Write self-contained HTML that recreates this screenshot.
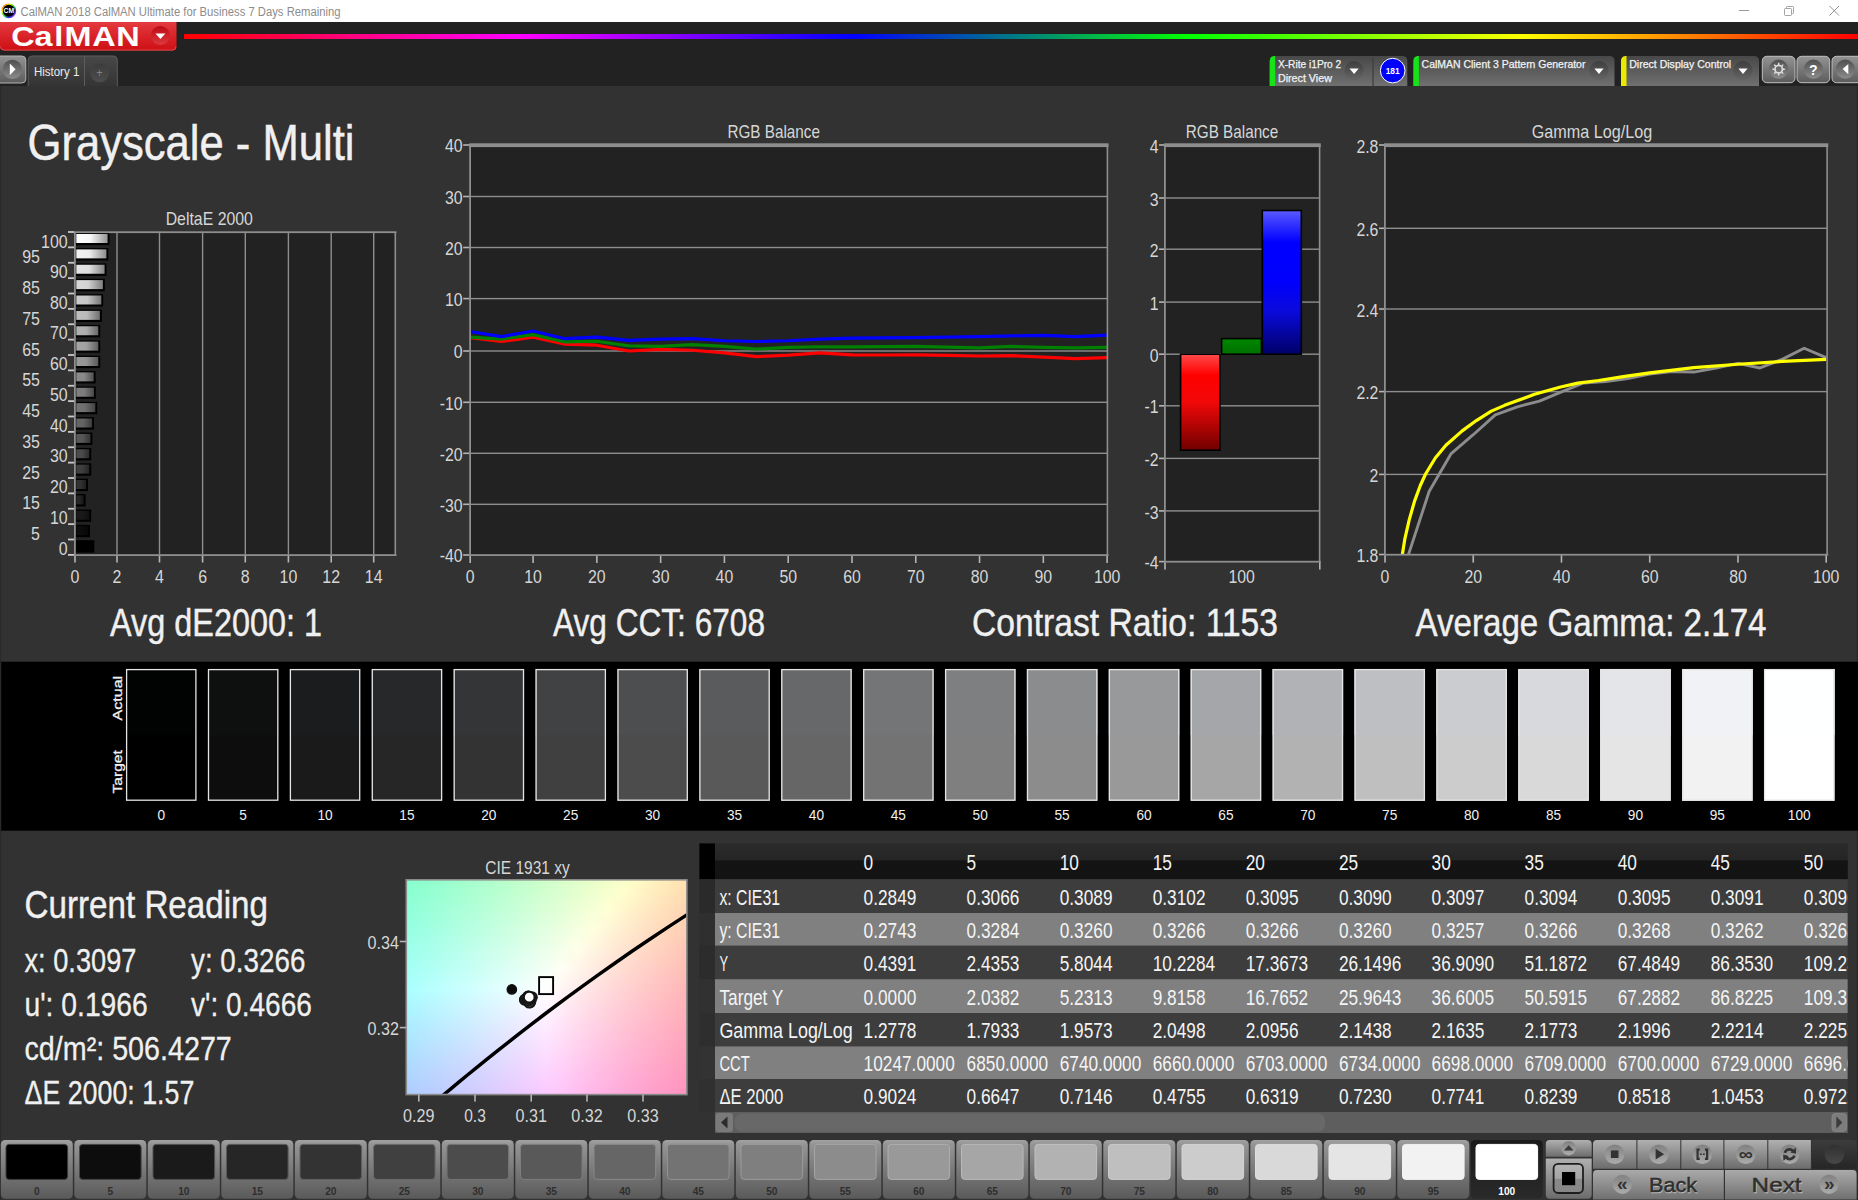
<!DOCTYPE html>
<html lang="en"><head><meta charset="utf-8"><title>CalMAN 2018</title>
<style>
#cie{position:absolute;left:406px;top:880px;width:281px;height:215px;background:linear-gradient(90deg,#86ffce,#8dffce,#95ffcd,#9dffcd,#a5ffcd,#adffcc,#b5ffcc,#beffcb,#c6ffcb,#cfffcb,#d7ffca,#e0ffca,#e9ffca,#f2ffc9,#fcffc9,#fff9c4,#fff0bc,#ffe8b6,#ffe0af) 0 0px/100% 4px no-repeat,
linear-gradient(90deg,#87ffd0,#8fffcf,#96ffcf,#9effcf,#a6ffce,#afffce,#b7ffce,#bfffcd,#c8ffcd,#d0ffcc,#d9ffcc,#e2ffcc,#ebffcb,#f4ffcb,#fdffcb,#fff7c4,#ffefbd,#ffe6b6,#ffdeaf) 0 4px/100% 4px no-repeat,
linear-gradient(90deg,#88ffd1,#90ffd1,#98ffd1,#a0ffd0,#a8ffd0,#b0ffd0,#b8ffcf,#c1ffcf,#c9ffcf,#d2ffce,#dbffce,#e4ffcd,#edffcd,#f6ffcd,#ffffcc,#fff5c4,#ffedbd,#ffe5b6,#ffddb0) 0 8px/100% 4px no-repeat,
linear-gradient(90deg,#89ffd3,#91ffd3,#99ffd2,#a1ffd2,#a9ffd2,#b1ffd1,#baffd1,#c2ffd1,#cbffd0,#d4ffd0,#dcffd0,#e5ffcf,#efffcf,#f8ffcf,#fffdcc,#fff4c5,#ffebbd,#ffe3b6,#ffdbb0) 0 12px/100% 4px no-repeat,
linear-gradient(90deg,#8bffd4,#92ffd4,#9affd4,#a2ffd4,#abffd3,#b3ffd3,#bbffd3,#c4ffd2,#ccffd2,#d5ffd2,#deffd1,#e7ffd1,#f0ffd1,#faffd0,#fffbcd,#fff2c5,#ffe9be,#ffe1b7,#ffdab0) 0 16px/100% 4px no-repeat,
linear-gradient(90deg,#8cffd6,#94ffd6,#9cffd6,#a4ffd5,#acffd5,#b4ffd5,#bdffd4,#c5ffd4,#ceffd4,#d7ffd4,#e0ffd3,#e9ffd3,#f2ffd3,#fcffd2,#fff9cd,#fff0c5,#ffe8be,#ffe0b7,#ffd8b1) 0 20px/100% 4px no-repeat,
linear-gradient(90deg,#8dffd8,#95ffd8,#9dffd7,#a5ffd7,#adffd7,#b6ffd7,#beffd6,#c7ffd6,#d0ffd6,#d9ffd5,#e2ffd5,#ebffd5,#f4ffd4,#feffd4,#fff7cd,#ffeec6,#ffe6be,#ffdeb7,#ffd6b1) 0 24px/100% 4px no-repeat,
linear-gradient(90deg,#8effda,#96ffd9,#9effd9,#a7ffd9,#afffd9,#b7ffd8,#c0ffd8,#c8ffd8,#d1ffd7,#daffd7,#e3ffd7,#edffd7,#f6ffd6,#ffffd6,#fff5cd,#ffecc6,#ffe4bf,#ffdcb8,#ffd5b1) 0 28px/100% 4px no-repeat,
linear-gradient(90deg,#90ffdb,#98ffdb,#a0ffdb,#a8ffdb,#b0ffda,#b9ffda,#c1ffda,#caffda,#d3ffd9,#dcffd9,#e5ffd9,#eeffd8,#f8ffd8,#fffdd6,#fff3ce,#ffebc6,#ffe2bf,#ffdbb8,#ffd3b2) 0 32px/100% 4px no-repeat,
linear-gradient(90deg,#91ffdd,#99ffdd,#a1ffdd,#a9ffdc,#b2ffdc,#baffdc,#c3ffdc,#ccffdb,#d5ffdb,#deffdb,#e7ffdb,#f0ffda,#faffda,#fffbd6,#fff2ce,#ffe9c6,#ffe1bf,#ffd9b8,#ffd2b2) 0 36px/100% 4px no-repeat,
linear-gradient(90deg,#92ffdf,#9affdf,#a2ffde,#abffde,#b3ffde,#bcffde,#c4ffdd,#cdffdd,#d6ffdd,#dfffdd,#e9ffdc,#f2ffdc,#fcffdc,#fff9d6,#fff0ce,#ffe7c7,#ffdfbf,#ffd7b9,#ffd0b2) 0 40px/100% 4px no-repeat,
linear-gradient(90deg,#93ffe1,#9cffe0,#a4ffe0,#acffe0,#b5ffe0,#bdffe0,#c6ffdf,#cfffdf,#d8ffdf,#e1ffdf,#ebffde,#f4ffde,#feffde,#fff7d7,#ffeecf,#ffe5c7,#ffddc0,#ffd6b9,#ffcfb2) 0 44px/100% 4px no-repeat,
linear-gradient(90deg,#95ffe2,#9dffe2,#a5ffe2,#aeffe2,#b6ffe2,#bfffe1,#c8ffe1,#d1ffe1,#daffe1,#e3ffe1,#ecffe0,#f6ffe0,#fffedf,#fff5d7,#ffeccf,#ffe4c7,#ffdcc0,#ffd4b9,#ffcdb3) 0 48px/100% 4px no-repeat,
linear-gradient(90deg,#96ffe4,#9effe4,#a7ffe4,#afffe4,#b8ffe3,#c0ffe3,#c9ffe3,#d2ffe3,#dbffe3,#e5ffe2,#eeffe2,#f8ffe2,#fffce0,#fff3d7,#ffeacf,#ffe2c8,#ffdac0,#ffd3ba,#ffcbb3) 0 52px/100% 4px no-repeat,
linear-gradient(90deg,#97ffe6,#a0ffe6,#a8ffe6,#b1ffe6,#b9ffe5,#c2ffe5,#cbffe5,#d4ffe5,#ddffe5,#e7ffe4,#f0ffe4,#faffe4,#fffbe0,#fff1d7,#ffe9cf,#ffe0c8,#ffd8c1,#ffd1ba,#ffcab3) 0 56px/100% 4px no-repeat,
linear-gradient(90deg,#99ffe8,#a1ffe8,#aaffe8,#b2ffe7,#bbffe7,#c4ffe7,#cdffe7,#d6ffe7,#dfffe7,#e8ffe6,#f2ffe6,#fcffe6,#fff9e0,#ffefd8,#ffe7d0,#ffdfc8,#ffd7c1,#ffcfba,#ffc8b4) 0 60px/100% 4px no-repeat,
linear-gradient(90deg,#9affea,#a3ffea,#abffe9,#b4ffe9,#bcffe9,#c5ffe9,#ceffe9,#d7ffe9,#e1ffe9,#eaffe8,#f4ffe8,#feffe8,#fff7e0,#ffeed8,#ffe5d0,#ffddc8,#ffd5c1,#ffceba,#ffc7b4) 0 64px/100% 4px no-repeat,
linear-gradient(90deg,#9cffec,#a4ffec,#acffeb,#b5ffeb,#beffeb,#c7ffeb,#d0ffeb,#d9ffeb,#e3ffeb,#ecffea,#f6ffea,#fffee9,#fff5e1,#ffecd8,#ffe3d0,#ffdbc9,#ffd3c1,#ffccbb,#ffc5b4) 0 68px/100% 4px no-repeat,
linear-gradient(90deg,#9dffee,#a5ffed,#aeffed,#b7ffed,#c0ffed,#c9ffed,#d2ffed,#dbffed,#e4ffed,#eeffec,#f8ffec,#fffcea,#fff3e1,#ffead8,#ffe1d0,#ffd9c9,#ffd2c2,#ffcbbb,#ffc4b5) 0 72px/100% 4px no-repeat,
linear-gradient(90deg,#9effef,#a7ffef,#afffef,#b8ffef,#c1ffef,#caffef,#d3ffef,#ddffef,#e6ffef,#f0ffee,#faffee,#fffaea,#fff1e1,#ffe8d9,#ffe0d1,#ffd8c9,#ffd0c2,#ffc9bb,#ffc2b5) 0 76px/100% 4px no-repeat,
linear-gradient(90deg,#a0fff1,#a8fff1,#b1fff1,#bafff1,#c3fff1,#ccfff1,#d5fff1,#dffff1,#e8fff1,#f2fff1,#fcfff0,#fff8ea,#ffefe1,#ffe6d9,#ffded1,#ffd6c9,#ffcfc2,#ffc8bc,#ffc1b5) 0 80px/100% 4px no-repeat,
linear-gradient(90deg,#a1fff3,#aafff3,#b2fff3,#bbfff3,#c4fff3,#cefff3,#d7fff3,#e0fff3,#eafff3,#f4fff3,#fefff3,#fff6ea,#ffede1,#ffe4d9,#ffdcd1,#ffd4ca,#ffcdc3,#ffc6bc,#ffbfb6) 0 84px/100% 4px no-repeat,
linear-gradient(90deg,#a3fff5,#abfff5,#b4fff5,#bdfff5,#c6fff5,#cffff5,#d9fff5,#e2fff5,#ecfff5,#f6fff5,#fffef4,#fff5eb,#ffebe2,#ffe3d9,#ffdbd1,#ffd3ca,#ffcbc3,#ffc5bc,#ffbeb6) 0 88px/100% 4px no-repeat,
linear-gradient(90deg,#a4fff7,#adfff7,#b6fff7,#bffff7,#c8fff7,#d1fff7,#dafff7,#e4fff7,#eefff7,#f8fff7,#fffcf4,#fff3eb,#ffe9e2,#ffe1da,#ffd9d2,#ffd1ca,#ffcac3,#ffc3bc,#ffbcb6) 0 92px/100% 4px no-repeat,
linear-gradient(90deg,#a5fff9,#aefff9,#b7fff9,#c0fff9,#c9fff9,#d3fff9,#dcfff9,#e6fff9,#f0fff9,#fafff9,#fffaf4,#fff1eb,#ffe8e2,#ffdfda,#ffd7d2,#ffd0cb,#ffc8c3,#ffc1bd,#ffbbb6) 0 96px/100% 4px no-repeat,
linear-gradient(90deg,#a7fffb,#b0fffb,#b9fffb,#c2fffb,#cbfffb,#d5fffb,#defffb,#e8fffb,#f2fffb,#fcfffb,#fff8f5,#ffefeb,#ffe6e2,#ffddda,#ffd5d2,#ffcecb,#ffc7c4,#ffc0bd,#ffbab7) 0 100px/100% 4px no-repeat,
linear-gradient(90deg,#a8fffd,#b1fffd,#bafffd,#c4fffd,#cdfffd,#d6fffd,#e0fffd,#eafffd,#f4fffd,#fefffd,#fff6f5,#ffedeb,#ffe4e3,#ffdcda,#ffd4d2,#ffcccb,#ffc5c4,#ffbebd,#ffb8b7) 0 104px/100% 4px no-repeat,
linear-gradient(90deg,#aaffff,#b3ffff,#bcffff,#c5feff,#cefeff,#d8feff,#e1feff,#ebfeff,#f5feff,#fffeff,#fff4f5,#ffebec,#ffe2e3,#ffdadb,#ffd2d3,#ffcbcb,#ffc4c4,#ffbdbe,#ffb7b7) 0 108px/100% 4px no-repeat,
linear-gradient(90deg,#aafdff,#b3fcff,#bcfcff,#c5fcff,#cefcff,#d8fcff,#e1fcff,#ebfcff,#f5fcff,#fffcff,#fff2f5,#ffe9ec,#ffe0e3,#ffd8db,#ffd0d3,#ffc9cc,#ffc2c5,#ffbbbe,#ffb5b8) 0 112px/100% 4px no-repeat,
linear-gradient(90deg,#aafaff,#b3faff,#bcfaff,#c5faff,#cefaff,#d8faff,#e1faff,#ebfaff,#f5faff,#fffaff,#fff0f5,#ffe7ec,#ffdfe3,#ffd6db,#ffcfd3,#ffc7cc,#ffc1c5,#ffbabe,#ffb4b8) 0 116px/100% 4px no-repeat,
linear-gradient(90deg,#aaf8ff,#b3f8ff,#bcf8ff,#c5f8ff,#cef8ff,#d8f8ff,#e1f8ff,#ebf8ff,#f5f8ff,#fff8ff,#ffeef5,#ffe5ec,#ffdde3,#ffd5db,#ffcdd3,#ffc6cc,#ffbfc5,#ffb9be,#ffb2b8) 0 120px/100% 4px no-repeat,
linear-gradient(90deg,#aaf6ff,#b3f6ff,#bcf6ff,#c5f6ff,#cef6ff,#d8f6ff,#e1f6ff,#ebf6ff,#f5f6ff,#fff6ff,#ffecf6,#ffe3ec,#ffdbe4,#ffd3db,#ffcbd4,#ffc4cc,#ffbdc5,#ffb7bf,#ffb1b8) 0 124px/100% 4px no-repeat,
linear-gradient(90deg,#aaf4ff,#b3f4ff,#bcf4ff,#c5f4ff,#cef4ff,#d8f4ff,#e1f4ff,#ebf4ff,#f4f4ff,#fef3ff,#ffebf6,#ffe2ed,#ffd9e4,#ffd1dc,#ffcad4,#ffc3cd,#ffbcc6,#ffb6bf,#ffafb9) 0 128px/100% 4px no-repeat,
linear-gradient(90deg,#aaf2ff,#b3f2ff,#bcf2ff,#c5f2ff,#cef2ff,#d8f2ff,#e1f2ff,#ebf2ff,#f4f1ff,#fef1ff,#ffe9f6,#ffe0ed,#ffd7e4,#ffd0dc,#ffc8d4,#ffc1cd,#ffbac6,#ffb4bf,#ffaeb9) 0 132px/100% 4px no-repeat,
linear-gradient(90deg,#abf0ff,#b3f0ff,#bcf0ff,#c5f0ff,#cef0ff,#d8f0ff,#e1f0ff,#eaefff,#f4efff,#feefff,#ffe7f6,#ffdeed,#ffd6e4,#ffcedc,#ffc7d4,#ffc0cd,#ffb9c6,#ffb3c0,#ffadb9) 0 136px/100% 4px no-repeat,
linear-gradient(90deg,#abeeff,#b3eeff,#bceeff,#c5eeff,#ceeeff,#d7eeff,#e1eeff,#eaedff,#f4edff,#feedff,#ffe5f6,#ffdced,#ffd4e5,#ffccdc,#ffc5d5,#ffbecd,#ffb7c6,#ffb1c0,#ffabba) 0 140px/100% 4px no-repeat,
linear-gradient(90deg,#abecff,#b3ecff,#bcecff,#c5ecff,#ceecff,#d7ecff,#e1ebff,#eaebff,#f4ebff,#feebff,#ffe3f7,#ffdaed,#ffd2e5,#ffcbdd,#ffc3d5,#ffbdce,#ffb6c7,#ffb0c0,#ffaaba) 0 144px/100% 4px no-repeat,
linear-gradient(90deg,#abebff,#b4eaff,#bceaff,#c5eaff,#ceeaff,#d7eaff,#e1e9ff,#eae9ff,#f4e9ff,#fee9ff,#ffe1f7,#ffd9ee,#ffd1e5,#ffc9dd,#ffc2d5,#ffbbce,#ffb5c7,#ffaec0,#ffa9ba) 0 148px/100% 4px no-repeat,
linear-gradient(90deg,#abe9ff,#b4e8ff,#bce8ff,#c5e8ff,#cee8ff,#d7e8ff,#e1e7ff,#eae7ff,#f4e7ff,#fde7ff,#ffdff7,#ffd7ee,#ffcfe5,#ffc7dd,#ffc0d5,#ffb9ce,#ffb3c7,#ffadc1,#ffa7ba) 0 152px/100% 4px no-repeat,
linear-gradient(90deg,#abe7ff,#b4e7ff,#bce6ff,#c5e6ff,#cee6ff,#d7e6ff,#e1e5ff,#eae5ff,#f4e5ff,#fde5ff,#ffddf7,#ffd5ee,#ffcde5,#ffc6dd,#ffbfd6,#ffb8ce,#ffb2c7,#ffacc1,#ffa6bb) 0 156px/100% 4px no-repeat,
linear-gradient(90deg,#abe5ff,#b4e5ff,#bde4ff,#c5e4ff,#cee4ff,#d7e4ff,#e1e3ff,#eae3ff,#f4e3ff,#fde3ff,#ffdcf7,#ffd3ee,#ffcbe6,#ffc4de,#ffbdd6,#ffb6cf,#ffb0c8,#ffaac1,#ffa4bb) 0 160px/100% 4px no-repeat,
linear-gradient(90deg,#abe3ff,#b4e3ff,#bde2ff,#c5e2ff,#cee2ff,#d7e2ff,#e1e1ff,#eae1ff,#f3e1ff,#fde1ff,#ffdaf7,#ffd2ee,#ffcae6,#ffc2de,#ffbbd6,#ffb5cf,#ffafc8,#ffa9c1,#ffa3bb) 0 164px/100% 4px no-repeat,
linear-gradient(90deg,#ace1ff,#b4e1ff,#bde1ff,#c5e0ff,#cee0ff,#d7e0ff,#e1e0ff,#eadfff,#f3dfff,#fddfff,#ffd8f8,#ffd0ef,#ffc8e6,#ffc1de,#ffbad6,#ffb3cf,#ffadc8,#ffa7c2,#ffa2bb) 0 168px/100% 4px no-repeat,
linear-gradient(90deg,#acdfff,#b4dfff,#bddfff,#c5deff,#cedeff,#d7deff,#e0deff,#eaddff,#f3ddff,#fdddff,#ffd6f8,#ffceef,#ffc6e6,#ffbfde,#ffb8d7,#ffb2cf,#ffacc8,#ffa6c2,#ffa0bc) 0 172px/100% 4px no-repeat,
linear-gradient(90deg,#acddff,#b4ddff,#bdddff,#c6dcff,#cedcff,#d7dcff,#e0dcff,#eadbff,#f3dbff,#fddbff,#ffd4f8,#ffccef,#ffc5e6,#ffbede,#ffb7d7,#ffb0d0,#ffaac9,#ffa5c2,#ff9fbc) 0 176px/100% 4px no-repeat,
linear-gradient(90deg,#acdbff,#b4dbff,#bddbff,#c6dbff,#cedaff,#d7daff,#e0daff,#ead9ff,#f3d9ff,#fcd9ff,#ffd3f8,#ffcbef,#ffc3e7,#ffbcdf,#ffb5d7,#ffafd0,#ffa9c9,#ffa3c2,#ff9ebc) 0 180px/100% 4px no-repeat,
linear-gradient(90deg,#acdaff,#b4d9ff,#bdd9ff,#c6d9ff,#ced8ff,#d7d8ff,#e0d8ff,#ead7ff,#f3d7ff,#fcd7ff,#ffd1f8,#ffc9ef,#ffc1e7,#ffbadf,#ffb4d7,#ffadd0,#ffa7c9,#ffa2c3,#ff9cbc) 0 184px/100% 4px no-repeat,
linear-gradient(90deg,#acd8ff,#b5d7ff,#bdd7ff,#c6d7ff,#ced7ff,#d7d6ff,#e0d6ff,#e9d6ff,#f3d5ff,#fcd5ff,#ffcff8,#ffc7ef,#ffc0e7,#ffb9df,#ffb2d7,#ffacd0,#ffa6c9,#ffa0c3,#ff9bbd) 0 188px/100% 4px no-repeat,
linear-gradient(90deg,#acd6ff,#b5d6ff,#bdd5ff,#c6d5ff,#ced5ff,#d7d4ff,#e0d4ff,#e9d4ff,#f3d3ff,#fcd3ff,#ffcdf9,#ffc5f0,#ffbee7,#ffb7df,#ffb1d8,#ffabd1,#ffa5ca,#ff9fc3,#ff9abd) 0 192px/100% 4px no-repeat,
linear-gradient(90deg,#acd4ff,#b5d4ff,#bdd3ff,#c6d3ff,#ced3ff,#d7d2ff,#e0d2ff,#e9d2ff,#f3d1ff,#fcd1ff,#ffcbf9,#ffc4f0,#ffbde7,#ffb6df,#ffafd8,#ffa9d1,#ffa3ca,#ff9ec3,#ff98bd) 0 196px/100% 4px no-repeat,
linear-gradient(90deg,#add2ff,#b5d2ff,#bdd2ff,#c6d1ff,#ced1ff,#d7d1ff,#e0d0ff,#e9d0ff,#f2cfff,#fccfff,#ffcaf9,#ffc2f0,#ffbbe8,#ffb4e0,#ffaed8,#ffa8d1,#ffa2ca,#ff9cc4,#ff97be) 0 200px/100% 4px no-repeat,
linear-gradient(90deg,#add1ff,#b5d0ff,#bdd0ff,#c6d0ff,#cecfff,#d7cfff,#e0ceff,#e9ceff,#f2ceff,#fccdff,#ffc8f9,#ffc0f0,#ffb9e8,#ffb3e0,#ffacd8,#ffa6d1,#ffa0ca,#ff9bc4,#ff96be) 0 204px/100% 4px no-repeat,
linear-gradient(90deg,#adcfff,#b5ceff,#bdceff,#c6ceff,#cecdff,#d7cdff,#e0cdff,#e9ccff,#f2ccff,#fccbff,#ffc6f9,#ffbff0,#ffb8e8,#ffb1e0,#ffabd9,#ffa5d1,#ff9fcb,#ff9ac4,#ff94be) 0 208px/100% 4px no-repeat,
linear-gradient(90deg,#adcdff,#b5cdff,#bdccff,#c6ccff,#ceccff,#d7cbff,#e0cbff,#e9caff,#f2caff,#fbc9ff,#ffc5f9,#ffbdf1,#ffb6e8,#ffb0e0,#ffa9d9,#ffa3d2,#ff9ecb,#ff98c4,#ff93be) 0 212px/100% 4px no-repeat}
html,body{margin:0;padding:0;background:#323232;width:1858px;height:1200px;overflow:hidden}
svg{position:absolute;left:0;top:0}
text{font-family:"Liberation Sans",sans-serif;white-space:pre}
</style></head>
<body>
<div id="cie"></div>
<svg width="1858" height="1200" viewBox="0 0 1858 1200">
<defs>
<linearGradient id="rb" x1="0" y1="0" x2="1" y2="0"><stop offset="0" stop-color="#ff0000"/><stop offset="0.2" stop-color="#ff00ff"/><stop offset="0.4" stop-color="#0000ff"/><stop offset="0.6" stop-color="#00ff00"/><stop offset="0.8" stop-color="#ffff00"/><stop offset="1" stop-color="#ff0000"/></linearGradient>
<linearGradient id="redbtn" x1="0" y1="0" x2="0" y2="1"><stop offset="0" stop-color="#e33b40"/><stop offset="0.5" stop-color="#d92328"/><stop offset="1" stop-color="#cd1015"/></linearGradient>
<linearGradient id="redc" x1="0" y1="0" x2="0" y2="1"><stop offset="0" stop-color="#bd0a14"/><stop offset="1" stop-color="#dc3a40"/></linearGradient>
<linearGradient id="gbtn" x1="0" y1="0" x2="0" y2="1"><stop offset="0" stop-color="#939393"/><stop offset="1" stop-color="#5c5c5c"/></linearGradient>
<linearGradient id="gcirc" x1="0" y1="0" x2="0" y2="1"><stop offset="0" stop-color="#505050"/><stop offset="1" stop-color="#8c8c8c"/></linearGradient>
<linearGradient id="tab" x1="0" y1="0" x2="0" y2="1"><stop offset="0" stop-color="#484848"/><stop offset="1" stop-color="#343434"/></linearGradient>
<linearGradient id="pcirc" x1="0" y1="0" x2="0" y2="1"><stop offset="0" stop-color="#3c3c3c"/><stop offset="1" stop-color="#4c4c4c"/></linearGradient>
<linearGradient id="panel" x1="0" y1="0" x2="0" y2="1"><stop offset="0" stop-color="#484848"/><stop offset="1" stop-color="#707070"/></linearGradient>
<linearGradient id="dcirc" x1="0" y1="0" x2="0" y2="1"><stop offset="0" stop-color="#3e3e3e"/><stop offset="1" stop-color="#666666"/></linearGradient>
<linearGradient id="icorim" x1="0" y1="0" x2="1" y2="1"><stop offset="0" stop-color="#ff2020"/><stop offset="0.25" stop-color="#ffe000"/><stop offset="0.5" stop-color="#20e020"/><stop offset="0.75" stop-color="#2040ff"/><stop offset="1" stop-color="#e020e0"/></linearGradient>
</defs>
<rect x="0" y="0" width="1858" height="22" fill="#ffffff"/>
<circle cx="8.8" cy="10.8" r="6.7" fill="#000000" stroke="url(#icorim)" stroke-width="1.4"/>
<text x="8.8" y="13.4" font-size="7" fill="#ffffff" text-anchor="middle" font-weight="bold" textLength="10.5" lengthAdjust="spacingAndGlyphs">CM</text>
<text x="20.5" y="15.5" font-size="12" fill="#8c8c8c" textLength="320" lengthAdjust="spacingAndGlyphs">CalMAN 2018 CalMAN Ultimate for Business 7 Days Remaining</text>
<line x1="1739" y1="10.5" x2="1749" y2="10.5" stroke="#9a9a9a" stroke-width="1"/>
<rect x="1784.5" y="8.5" width="7" height="7" fill="none" rx="0.8" stroke="#9a9a9a" stroke-width="0.9"/>
<path d="M1786.5 8.5V7.3Q1786.5 6.5 1787.3 6.5H1792.7Q1793.5 6.5 1793.5 7.3V12.7Q1793.5 13.5 1792.7 13.5H1791.5" fill="none" stroke="#9a9a9a" stroke-width="0.9"/>
<path d="M1829.5 6L1839 15.5M1839 6L1829.5 15.5" fill="none" stroke="#8c8c8c" stroke-width="0.95"/>
<rect x="0" y="22" width="1858" height="64" fill="#222222"/>
<rect x="184" y="34" width="1674" height="5" fill="url(#rb)"/>
<path d="M0 22H176.5V46.5Q176.5 50.6 172.5 50.6H4Q0 50.6 0 46.5Z" fill="url(#redbtn)"/>
<path d="M0.5 46.5Q0.5 50.1 4 50.1H172.5Q176 50.1 176 46.5" fill="none" stroke="#e8585c" stroke-width="0.8"/>
<text transform="translate(0,45.7) scale(1.15,1)" x="9.89 30.05 47.16 56.11 80.25 101.07" y="0" font-size="28.2" font-weight="bold" fill="#ffffff">CalMAN</text>
<circle cx="160.4" cy="35.5" r="9.5" fill="url(#redc)"/>
<polygon points="155.4,33.4 165.4,33.4 160.4,39" fill="#ffffff"/>
<rect x="-5" y="56" width="30.8" height="27" fill="url(#gbtn)" rx="4" stroke="#b4b4b4" stroke-width="1"/>
<circle cx="12.4" cy="69.4" r="9.7" fill="url(#gcirc)"/>
<polygon points="9.8,63.4 9.8,75.2 15.6,69.3" fill="#ffffff"/>
<path d="M28.2 86V60Q28.2 56 32.2 56H113.3Q117.3 56 117.3 60V86Z" fill="url(#tab)"/>
<path d="M28.2 86V60Q28.2 56 32.2 56H113.3Q117.3 56 117.3 60V86" fill="none" stroke="#5c5c5c" stroke-width="1"/>
<line x1="84.5" y1="56.5" x2="84.5" y2="86" stroke="#5c5c5c" stroke-width="1"/>
<text x="33.9" y="76" font-size="12" fill="#ececec" textLength="45.4" lengthAdjust="spacingAndGlyphs">History 1</text>
<circle cx="99.6" cy="72.7" r="9.5" fill="url(#pcirc)"/>
<text x="99.6" y="77" font-size="12" fill="#808080" text-anchor="middle" textLength="6.5" lengthAdjust="spacingAndGlyphs">+</text>
<path d="M1269.7 86V61Q1269.7 56 1274.7 56H1402.3Q1407.3 56 1407.3 61V86Z" fill="url(#panel)"/>
<path d="M1269.7 86V61Q1269.7 56.3 1274.2 56H1275.2V86Z" fill="#18e218"/>
<text x="1277.9" y="67.8" font-size="10.3" fill="#f2f2f2" textLength="63.4" lengthAdjust="spacingAndGlyphs" stroke="#f2f2f2" stroke-width="0.25">X-Rite i1Pro 2</text>
<text x="1277.9" y="81.8" font-size="10.3" fill="#f2f2f2" textLength="54" lengthAdjust="spacingAndGlyphs" stroke="#f2f2f2" stroke-width="0.25">Direct View</text>
<circle cx="1354.1" cy="70.7" r="9.6" fill="url(#dcirc)"/>
<polygon points="1349.5,68.6 1358.7,68.6 1354.1,74" fill="#ffffff"/>
<line x1="1373" y1="58" x2="1373" y2="86" stroke="#3c3c3c" stroke-width="1.2"/>
<circle cx="1392.7" cy="70.6" r="12.3" fill="#0000ff" stroke="#ffffff" stroke-width="1"/>
<text x="1392.7" y="74" font-size="9.6" fill="#ffffff" text-anchor="middle" font-weight="bold" font-family="'Liberation Serif',serif" textLength="14" lengthAdjust="spacingAndGlyphs">181</text>
<path d="M1413.4 86V61Q1413.4 56 1418.4 56H1609.5Q1614.5 56 1614.5 61V86Z" fill="url(#panel)"/>
<path d="M1413.4 86V61Q1413.4 56.3 1417.9 56H1418.9V86Z" fill="#18e218"/>
<text x="1421.6" y="67.8" font-size="10.3" fill="#f2f2f2" textLength="163.8" lengthAdjust="spacingAndGlyphs" stroke="#f2f2f2" stroke-width="0.25">CalMAN Client 3 Pattern Generator</text>
<circle cx="1599" cy="70.7" r="9.6" fill="url(#dcirc)"/>
<polygon points="1594.4,68.6 1603.6,68.6 1599,74" fill="#ffffff"/>
<path d="M1621 86V61Q1621 56 1626 56H1754Q1759 56 1759 61V86Z" fill="url(#panel)"/>
<path d="M1621 86V61Q1621 56.3 1625.5 56H1626.5V86Z" fill="#eaea00"/>
<text x="1629.2" y="67.8" font-size="10.3" fill="#f2f2f2" textLength="102" lengthAdjust="spacingAndGlyphs" stroke="#f2f2f2" stroke-width="0.25">Direct Display Control</text>
<circle cx="1743" cy="70.7" r="9.6" fill="url(#dcirc)"/>
<polygon points="1738.4,68.6 1747.6,68.6 1743,74" fill="#ffffff"/>
<rect x="1762.3" y="56.3" width="32.7" height="26.4" fill="url(#gbtn)" rx="4.5" stroke="#c0c0c0" stroke-width="1"/>
<circle cx="1778.7" cy="69.2" r="9.6" fill="url(#gcirc)"/>
<rect x="1797" y="56.3" width="32.7" height="26.4" fill="url(#gbtn)" rx="4.5" stroke="#c0c0c0" stroke-width="1"/>
<circle cx="1813.4" cy="69.2" r="9.6" fill="url(#gcirc)"/>
<rect x="1832" y="56.3" width="32.7" height="26.4" fill="url(#gbtn)" rx="4.5" stroke="#c0c0c0" stroke-width="1"/>
<circle cx="1845.3" cy="69.2" r="9.6" fill="url(#gcirc)"/>
<circle cx="1778.7" cy="69.2" r="3.7" fill="none" stroke="#dedede" stroke-width="1.7"/>
<polygon points="1777.71,64.91 1778.14,62.82 1779.26,62.82 1779.69,64.91" fill="#dedede"/>
<polygon points="1781.03,65.47 1782.81,64.3 1783.6,65.09 1782.43,66.87" fill="#dedede"/>
<polygon points="1782.99,68.21 1785.08,68.64 1785.08,69.76 1782.99,70.19" fill="#dedede"/>
<polygon points="1782.43,71.53 1783.6,73.31 1782.81,74.1 1781.03,72.93" fill="#dedede"/>
<polygon points="1779.69,73.49 1779.26,75.58 1778.14,75.58 1777.71,73.49" fill="#dedede"/>
<polygon points="1776.37,72.93 1774.59,74.1 1773.8,73.31 1774.97,71.53" fill="#dedede"/>
<polygon points="1774.41,70.19 1772.32,69.76 1772.32,68.64 1774.41,68.21" fill="#dedede"/>
<polygon points="1774.97,66.87 1773.8,65.09 1774.59,64.3 1776.37,65.47" fill="#dedede"/>
<text x="1813.4" y="75.3" font-size="14.6" fill="#ffffff" text-anchor="middle" font-weight="bold" textLength="8.6" lengthAdjust="spacingAndGlyphs">?</text>
<polygon points="1848.3,64 1848.3,74.2 1842.6,69.1" fill="#ffffff"/>
<rect x="0" y="86" width="1.2" height="1114" fill="#2a2a2a"/>
<rect x="1856.6" y="86" width="1.4" height="1114" fill="#2a2a2a"/>
<text x="27.5" y="160.2" font-size="49.5" fill="#f0f0f0" textLength="327" lengthAdjust="spacingAndGlyphs" stroke="#f0f0f0" stroke-width="0.5">Grayscale - Multi</text>
<rect x="75" y="232.5" width="320.5" height="322.5" fill="#222222"/>
<text x="209.3" y="225.3" font-size="18.6" fill="#d6d6d6" text-anchor="middle" textLength="87.3" lengthAdjust="spacingAndGlyphs">DeltaE 2000</text>
<rect x="74.2" y="555" width="1.6" height="7.5" fill="#b4b4b4"/>
<text x="75" y="583" font-size="19" fill="#d6d6d6" text-anchor="middle" textLength="8.88" lengthAdjust="spacingAndGlyphs">0</text>
<rect x="116.3" y="232.5" width="1.4" height="322.5" fill="#8e8e8e"/>
<rect x="116.2" y="555" width="1.6" height="7.5" fill="#b4b4b4"/>
<text x="117" y="583" font-size="19" fill="#d6d6d6" text-anchor="middle" textLength="8.88" lengthAdjust="spacingAndGlyphs">2</text>
<rect x="158.8" y="232.5" width="1.4" height="322.5" fill="#8e8e8e"/>
<rect x="158.7" y="555" width="1.6" height="7.5" fill="#b4b4b4"/>
<text x="159.5" y="583" font-size="19" fill="#d6d6d6" text-anchor="middle" textLength="8.88" lengthAdjust="spacingAndGlyphs">4</text>
<rect x="201.9" y="232.5" width="1.4" height="322.5" fill="#8e8e8e"/>
<rect x="201.8" y="555" width="1.6" height="7.5" fill="#b4b4b4"/>
<text x="202.6" y="583" font-size="19" fill="#d6d6d6" text-anchor="middle" textLength="8.88" lengthAdjust="spacingAndGlyphs">6</text>
<rect x="244.6" y="232.5" width="1.4" height="322.5" fill="#8e8e8e"/>
<rect x="244.5" y="555" width="1.6" height="7.5" fill="#b4b4b4"/>
<text x="245.3" y="583" font-size="19" fill="#d6d6d6" text-anchor="middle" textLength="8.88" lengthAdjust="spacingAndGlyphs">8</text>
<rect x="287.7" y="232.5" width="1.4" height="322.5" fill="#8e8e8e"/>
<rect x="287.6" y="555" width="1.6" height="7.5" fill="#b4b4b4"/>
<text x="288.4" y="583" font-size="19" fill="#d6d6d6" text-anchor="middle" textLength="17.75" lengthAdjust="spacingAndGlyphs">10</text>
<rect x="330.5" y="232.5" width="1.4" height="322.5" fill="#8e8e8e"/>
<rect x="330.4" y="555" width="1.6" height="7.5" fill="#b4b4b4"/>
<text x="331.2" y="583" font-size="19" fill="#d6d6d6" text-anchor="middle" textLength="17.75" lengthAdjust="spacingAndGlyphs">12</text>
<rect x="373" y="232.5" width="1.4" height="322.5" fill="#8e8e8e"/>
<rect x="372.9" y="555" width="1.6" height="7.5" fill="#b4b4b4"/>
<text x="373.7" y="583" font-size="19" fill="#d6d6d6" text-anchor="middle" textLength="17.75" lengthAdjust="spacingAndGlyphs">14</text>
<defs>
<linearGradient id="b0" x1="0" y1="0" x2="1" y2="0"><stop offset="0" stop-color="#000000"/><stop offset="0.45" stop-color="#000000"/><stop offset="1" stop-color="#000000"/></linearGradient>
<linearGradient id="b1" x1="0" y1="0" x2="1" y2="0"><stop offset="0" stop-color="#0d0d0d"/><stop offset="0.45" stop-color="#0c0c0c"/><stop offset="1" stop-color="#070707"/></linearGradient>
<linearGradient id="b2" x1="0" y1="0" x2="1" y2="0"><stop offset="0" stop-color="#1a1a1a"/><stop offset="0.45" stop-color="#191919"/><stop offset="1" stop-color="#0f0f0f"/></linearGradient>
<linearGradient id="b3" x1="0" y1="0" x2="1" y2="0"><stop offset="0" stop-color="#262626"/><stop offset="0.45" stop-color="#252525"/><stop offset="1" stop-color="#161616"/></linearGradient>
<linearGradient id="b4" x1="0" y1="0" x2="1" y2="0"><stop offset="0" stop-color="#333333"/><stop offset="0.45" stop-color="#313131"/><stop offset="1" stop-color="#1e1e1e"/></linearGradient>
<linearGradient id="b5" x1="0" y1="0" x2="1" y2="0"><stop offset="0" stop-color="#404040"/><stop offset="0.45" stop-color="#3e3e3e"/><stop offset="1" stop-color="#252525"/></linearGradient>
<linearGradient id="b6" x1="0" y1="0" x2="1" y2="0"><stop offset="0" stop-color="#4c4c4c"/><stop offset="0.45" stop-color="#4a4a4a"/><stop offset="1" stop-color="#2c2c2c"/></linearGradient>
<linearGradient id="b7" x1="0" y1="0" x2="1" y2="0"><stop offset="0" stop-color="#595959"/><stop offset="0.45" stop-color="#575757"/><stop offset="1" stop-color="#343434"/></linearGradient>
<linearGradient id="b8" x1="0" y1="0" x2="1" y2="0"><stop offset="0" stop-color="#666666"/><stop offset="0.45" stop-color="#636363"/><stop offset="1" stop-color="#3b3b3b"/></linearGradient>
<linearGradient id="b9" x1="0" y1="0" x2="1" y2="0"><stop offset="0" stop-color="#737373"/><stop offset="0.45" stop-color="#6f6f6f"/><stop offset="1" stop-color="#434343"/></linearGradient>
<linearGradient id="b10" x1="0" y1="0" x2="1" y2="0"><stop offset="0" stop-color="#7f7f7f"/><stop offset="0.45" stop-color="#7c7c7c"/><stop offset="1" stop-color="#4a4a4a"/></linearGradient>
<linearGradient id="b11" x1="0" y1="0" x2="1" y2="0"><stop offset="0" stop-color="#8c8c8c"/><stop offset="0.45" stop-color="#888888"/><stop offset="1" stop-color="#515151"/></linearGradient>
<linearGradient id="b12" x1="0" y1="0" x2="1" y2="0"><stop offset="0" stop-color="#999999"/><stop offset="0.45" stop-color="#949494"/><stop offset="1" stop-color="#595959"/></linearGradient>
<linearGradient id="b13" x1="0" y1="0" x2="1" y2="0"><stop offset="0" stop-color="#a6a6a6"/><stop offset="0.45" stop-color="#a1a1a1"/><stop offset="1" stop-color="#606060"/></linearGradient>
<linearGradient id="b14" x1="0" y1="0" x2="1" y2="0"><stop offset="0" stop-color="#b2b2b2"/><stop offset="0.45" stop-color="#adadad"/><stop offset="1" stop-color="#686868"/></linearGradient>
<linearGradient id="b15" x1="0" y1="0" x2="1" y2="0"><stop offset="0" stop-color="#bfbfbf"/><stop offset="0.45" stop-color="#bababa"/><stop offset="1" stop-color="#6f6f6f"/></linearGradient>
<linearGradient id="b16" x1="0" y1="0" x2="1" y2="0"><stop offset="0" stop-color="#cccccc"/><stop offset="0.45" stop-color="#c6c6c6"/><stop offset="1" stop-color="#767676"/></linearGradient>
<linearGradient id="b17" x1="0" y1="0" x2="1" y2="0"><stop offset="0" stop-color="#d9d9d9"/><stop offset="0.45" stop-color="#d2d2d2"/><stop offset="1" stop-color="#7e7e7e"/></linearGradient>
<linearGradient id="b18" x1="0" y1="0" x2="1" y2="0"><stop offset="0" stop-color="#e5e5e5"/><stop offset="0.45" stop-color="#dfdfdf"/><stop offset="1" stop-color="#858585"/></linearGradient>
<linearGradient id="b19" x1="0" y1="0" x2="1" y2="0"><stop offset="0" stop-color="#f2f2f2"/><stop offset="0.45" stop-color="#ebebeb"/><stop offset="1" stop-color="#8d8d8d"/></linearGradient>
<linearGradient id="b20" x1="0" y1="0" x2="1" y2="0"><stop offset="0" stop-color="#ffffff"/><stop offset="0.45" stop-color="#f7f7f7"/><stop offset="1" stop-color="#949494"/></linearGradient>
</defs>
<rect x="75.6" y="540.2" width="18.7" height="12.4" fill="#000000"/>
<rect x="76.3" y="541.5" width="16.1" height="9" fill="url(#b0)"/>
<rect x="75.6" y="524.83" width="14.4" height="12.4" fill="#000000"/>
<rect x="76.3" y="526.12" width="11.8" height="9" fill="url(#b1)"/>
<rect x="75.6" y="509.45" width="15.6" height="12.4" fill="#000000"/>
<rect x="76.3" y="510.75" width="13" height="9" fill="url(#b2)"/>
<rect x="75.6" y="494.08" width="10" height="12.4" fill="#000000"/>
<rect x="76.3" y="495.38" width="7.4" height="9" fill="url(#b3)"/>
<rect x="75.6" y="478.7" width="12.4" height="12.4" fill="#000000"/>
<rect x="76.3" y="480" width="9.8" height="9" fill="url(#b4)"/>
<rect x="75.6" y="463.33" width="15.6" height="12.4" fill="#000000"/>
<rect x="76.3" y="464.62" width="13" height="9" fill="url(#b5)"/>
<rect x="75.6" y="447.95" width="15.6" height="12.4" fill="#000000"/>
<rect x="76.3" y="449.25" width="13" height="9" fill="url(#b6)"/>
<rect x="75.6" y="432.58" width="16.8" height="12.4" fill="#000000"/>
<rect x="76.3" y="433.88" width="14.2" height="9" fill="url(#b7)"/>
<rect x="75.6" y="417.2" width="18.4" height="12.4" fill="#000000"/>
<rect x="76.3" y="418.5" width="15.8" height="9" fill="url(#b8)"/>
<rect x="75.6" y="401.83" width="21.6" height="12.4" fill="#000000"/>
<rect x="76.3" y="403.12" width="19" height="9" fill="url(#b9)"/>
<rect x="75.6" y="386.45" width="20.2" height="12.4" fill="#000000"/>
<rect x="76.3" y="387.75" width="17.6" height="9" fill="url(#b10)"/>
<rect x="75.6" y="371.08" width="20" height="12.4" fill="#000000"/>
<rect x="76.3" y="372.38" width="17.4" height="9" fill="url(#b11)"/>
<rect x="75.6" y="355.7" width="24.6" height="12.4" fill="#000000"/>
<rect x="76.3" y="357" width="22" height="9" fill="url(#b12)"/>
<rect x="75.6" y="340.33" width="24.6" height="12.4" fill="#000000"/>
<rect x="76.3" y="341.62" width="22" height="9" fill="url(#b13)"/>
<rect x="75.6" y="324.95" width="24.6" height="12.4" fill="#000000"/>
<rect x="76.3" y="326.25" width="22" height="9" fill="url(#b14)"/>
<rect x="75.6" y="309.58" width="26.2" height="12.4" fill="#000000"/>
<rect x="76.3" y="310.88" width="23.6" height="9" fill="url(#b15)"/>
<rect x="75.6" y="294.2" width="27.6" height="12.4" fill="#000000"/>
<rect x="76.3" y="295.5" width="25" height="9" fill="url(#b16)"/>
<rect x="75.6" y="278.83" width="29.2" height="12.4" fill="#000000"/>
<rect x="76.3" y="280.12" width="26.6" height="9" fill="url(#b17)"/>
<rect x="75.6" y="263.45" width="30.9" height="12.4" fill="#000000"/>
<rect x="76.3" y="264.75" width="28.3" height="9" fill="url(#b18)"/>
<rect x="75.6" y="248.08" width="32.7" height="12.4" fill="#000000"/>
<rect x="76.3" y="249.38" width="30.1" height="9" fill="url(#b19)"/>
<rect x="75.6" y="232.7" width="33.9" height="12.4" fill="#000000"/>
<rect x="76.3" y="234" width="31.3" height="9" fill="url(#b20)"/>
<rect x="68" y="231.1" width="6" height="1.8" fill="#c8c8c8"/>
<rect x="68" y="246.47" width="6" height="1.8" fill="#c8c8c8"/>
<rect x="68" y="261.85" width="6" height="1.8" fill="#c8c8c8"/>
<rect x="68" y="277.23" width="6" height="1.8" fill="#c8c8c8"/>
<rect x="68" y="292.6" width="6" height="1.8" fill="#c8c8c8"/>
<rect x="68" y="307.98" width="6" height="1.8" fill="#c8c8c8"/>
<rect x="68" y="323.35" width="6" height="1.8" fill="#c8c8c8"/>
<rect x="68" y="338.73" width="6" height="1.8" fill="#c8c8c8"/>
<rect x="68" y="354.1" width="6" height="1.8" fill="#c8c8c8"/>
<rect x="68" y="369.48" width="6" height="1.8" fill="#c8c8c8"/>
<rect x="68" y="384.85" width="6" height="1.8" fill="#c8c8c8"/>
<rect x="68" y="400.23" width="6" height="1.8" fill="#c8c8c8"/>
<rect x="68" y="415.6" width="6" height="1.8" fill="#c8c8c8"/>
<rect x="68" y="430.98" width="6" height="1.8" fill="#c8c8c8"/>
<rect x="68" y="446.35" width="6" height="1.8" fill="#c8c8c8"/>
<rect x="68" y="461.73" width="6" height="1.8" fill="#c8c8c8"/>
<rect x="68" y="477.1" width="6" height="1.8" fill="#c8c8c8"/>
<rect x="68" y="492.48" width="6" height="1.8" fill="#c8c8c8"/>
<rect x="68" y="507.85" width="6" height="1.8" fill="#c8c8c8"/>
<rect x="68" y="523.23" width="6" height="1.8" fill="#c8c8c8"/>
<rect x="68" y="538.6" width="6" height="1.8" fill="#c8c8c8"/>
<rect x="68" y="553.98" width="6" height="1.8" fill="#c8c8c8"/>
<text x="67.7" y="554.7" font-size="19" fill="#d6d6d6" text-anchor="end" textLength="8.88" lengthAdjust="spacingAndGlyphs">0</text>
<text x="40" y="540.23" font-size="19" fill="#d6d6d6" text-anchor="end" textLength="8.88" lengthAdjust="spacingAndGlyphs">5</text>
<text x="67.7" y="523.95" font-size="19" fill="#d6d6d6" text-anchor="end" textLength="17.75" lengthAdjust="spacingAndGlyphs">10</text>
<text x="40" y="509.48" font-size="19" fill="#d6d6d6" text-anchor="end" textLength="17.75" lengthAdjust="spacingAndGlyphs">15</text>
<text x="67.7" y="493.2" font-size="19" fill="#d6d6d6" text-anchor="end" textLength="17.75" lengthAdjust="spacingAndGlyphs">20</text>
<text x="40" y="478.73" font-size="19" fill="#d6d6d6" text-anchor="end" textLength="17.75" lengthAdjust="spacingAndGlyphs">25</text>
<text x="67.7" y="462.45" font-size="19" fill="#d6d6d6" text-anchor="end" textLength="17.75" lengthAdjust="spacingAndGlyphs">30</text>
<text x="40" y="447.98" font-size="19" fill="#d6d6d6" text-anchor="end" textLength="17.75" lengthAdjust="spacingAndGlyphs">35</text>
<text x="67.7" y="431.7" font-size="19" fill="#d6d6d6" text-anchor="end" textLength="17.75" lengthAdjust="spacingAndGlyphs">40</text>
<text x="40" y="417.23" font-size="19" fill="#d6d6d6" text-anchor="end" textLength="17.75" lengthAdjust="spacingAndGlyphs">45</text>
<text x="67.7" y="400.95" font-size="19" fill="#d6d6d6" text-anchor="end" textLength="17.75" lengthAdjust="spacingAndGlyphs">50</text>
<text x="40" y="386.48" font-size="19" fill="#d6d6d6" text-anchor="end" textLength="17.75" lengthAdjust="spacingAndGlyphs">55</text>
<text x="67.7" y="370.2" font-size="19" fill="#d6d6d6" text-anchor="end" textLength="17.75" lengthAdjust="spacingAndGlyphs">60</text>
<text x="40" y="355.73" font-size="19" fill="#d6d6d6" text-anchor="end" textLength="17.75" lengthAdjust="spacingAndGlyphs">65</text>
<text x="67.7" y="339.45" font-size="19" fill="#d6d6d6" text-anchor="end" textLength="17.75" lengthAdjust="spacingAndGlyphs">70</text>
<text x="40" y="324.98" font-size="19" fill="#d6d6d6" text-anchor="end" textLength="17.75" lengthAdjust="spacingAndGlyphs">75</text>
<text x="67.7" y="308.7" font-size="19" fill="#d6d6d6" text-anchor="end" textLength="17.75" lengthAdjust="spacingAndGlyphs">80</text>
<text x="40" y="294.23" font-size="19" fill="#d6d6d6" text-anchor="end" textLength="17.75" lengthAdjust="spacingAndGlyphs">85</text>
<text x="67.7" y="277.95" font-size="19" fill="#d6d6d6" text-anchor="end" textLength="17.75" lengthAdjust="spacingAndGlyphs">90</text>
<text x="40" y="263.48" font-size="19" fill="#d6d6d6" text-anchor="end" textLength="17.75" lengthAdjust="spacingAndGlyphs">95</text>
<text x="67.7" y="248.1" font-size="19" fill="#d6d6d6" text-anchor="end" textLength="26.63" lengthAdjust="spacingAndGlyphs">100</text>
<rect x="74" y="231.3" width="322.5" height="1.8" fill="#8e8e8e"/>
<rect x="394.5" y="232.5" width="1.6" height="322.5" fill="#8e8e8e"/>
<rect x="74" y="232.5" width="1.8" height="323.5" fill="#8e8e8e"/>
<rect x="74" y="554.2" width="322.5" height="1.8" fill="#8e8e8e"/>
<rect x="470.2" y="145.5" width="637.4" height="409.5" fill="#222222"/>
<text x="773.7" y="137.5" font-size="18.6" fill="#d6d6d6" text-anchor="middle" textLength="92.5" lengthAdjust="spacingAndGlyphs">RGB Balance</text>
<rect x="463.2" y="554.2" width="7" height="1.6" fill="#b4b4b4"/>
<text x="462.6" y="562.2" font-size="18.8" fill="#d6d6d6" text-anchor="end" textLength="22.88" lengthAdjust="spacingAndGlyphs">-40</text>
<rect x="470.2" y="503.6" width="637.4" height="1.4" fill="#8e8e8e"/>
<rect x="463.2" y="503.5" width="7" height="1.6" fill="#b4b4b4"/>
<text x="462.6" y="511.5" font-size="18.8" fill="#d6d6d6" text-anchor="end" textLength="22.88" lengthAdjust="spacingAndGlyphs">-30</text>
<rect x="470.2" y="452.6" width="637.4" height="1.4" fill="#8e8e8e"/>
<rect x="463.2" y="452.5" width="7" height="1.6" fill="#b4b4b4"/>
<text x="462.6" y="460.5" font-size="18.8" fill="#d6d6d6" text-anchor="end" textLength="22.88" lengthAdjust="spacingAndGlyphs">-20</text>
<rect x="470.2" y="401.6" width="637.4" height="1.4" fill="#8e8e8e"/>
<rect x="463.2" y="401.5" width="7" height="1.6" fill="#b4b4b4"/>
<text x="462.6" y="409.5" font-size="18.8" fill="#d6d6d6" text-anchor="end" textLength="22.88" lengthAdjust="spacingAndGlyphs">-10</text>
<rect x="470.2" y="350.3" width="637.4" height="1.4" fill="#8e8e8e"/>
<rect x="463.2" y="350.2" width="7" height="1.6" fill="#b4b4b4"/>
<text x="462.6" y="358.2" font-size="18.8" fill="#d6d6d6" text-anchor="end" textLength="8.8" lengthAdjust="spacingAndGlyphs">0</text>
<rect x="470.2" y="297.9" width="637.4" height="1.4" fill="#8e8e8e"/>
<rect x="463.2" y="297.8" width="7" height="1.6" fill="#b4b4b4"/>
<text x="462.6" y="305.8" font-size="18.8" fill="#d6d6d6" text-anchor="end" textLength="17.61" lengthAdjust="spacingAndGlyphs">10</text>
<rect x="470.2" y="246.8" width="637.4" height="1.4" fill="#8e8e8e"/>
<rect x="463.2" y="246.7" width="7" height="1.6" fill="#b4b4b4"/>
<text x="462.6" y="254.7" font-size="18.8" fill="#d6d6d6" text-anchor="end" textLength="17.61" lengthAdjust="spacingAndGlyphs">20</text>
<rect x="470.2" y="195.8" width="637.4" height="1.4" fill="#8e8e8e"/>
<rect x="463.2" y="195.7" width="7" height="1.6" fill="#b4b4b4"/>
<text x="462.6" y="203.7" font-size="18.8" fill="#d6d6d6" text-anchor="end" textLength="17.61" lengthAdjust="spacingAndGlyphs">30</text>
<rect x="463.2" y="144.2" width="7" height="1.6" fill="#b4b4b4"/>
<text x="462.6" y="152.2" font-size="18.8" fill="#d6d6d6" text-anchor="end" textLength="17.61" lengthAdjust="spacingAndGlyphs">40</text>
<rect x="469.4" y="555" width="1.6" height="8" fill="#b4b4b4"/>
<text x="470.2" y="582.8" font-size="18.8" fill="#d6d6d6" text-anchor="middle" textLength="8.8" lengthAdjust="spacingAndGlyphs">0</text>
<rect x="532.28" y="555" width="1.6" height="8" fill="#b4b4b4"/>
<text x="533.08" y="582.8" font-size="18.8" fill="#d6d6d6" text-anchor="middle" textLength="17.61" lengthAdjust="spacingAndGlyphs">10</text>
<rect x="596.06" y="555" width="1.6" height="8" fill="#b4b4b4"/>
<text x="596.86" y="582.8" font-size="18.8" fill="#d6d6d6" text-anchor="middle" textLength="17.61" lengthAdjust="spacingAndGlyphs">20</text>
<rect x="659.84" y="555" width="1.6" height="8" fill="#b4b4b4"/>
<text x="660.64" y="582.8" font-size="18.8" fill="#d6d6d6" text-anchor="middle" textLength="17.61" lengthAdjust="spacingAndGlyphs">30</text>
<rect x="723.62" y="555" width="1.6" height="8" fill="#b4b4b4"/>
<text x="724.42" y="582.8" font-size="18.8" fill="#d6d6d6" text-anchor="middle" textLength="17.61" lengthAdjust="spacingAndGlyphs">40</text>
<rect x="787.4" y="555" width="1.6" height="8" fill="#b4b4b4"/>
<text x="788.2" y="582.8" font-size="18.8" fill="#d6d6d6" text-anchor="middle" textLength="17.61" lengthAdjust="spacingAndGlyphs">50</text>
<rect x="851.18" y="555" width="1.6" height="8" fill="#b4b4b4"/>
<text x="851.98" y="582.8" font-size="18.8" fill="#d6d6d6" text-anchor="middle" textLength="17.61" lengthAdjust="spacingAndGlyphs">60</text>
<rect x="914.96" y="555" width="1.6" height="8" fill="#b4b4b4"/>
<text x="915.76" y="582.8" font-size="18.8" fill="#d6d6d6" text-anchor="middle" textLength="17.61" lengthAdjust="spacingAndGlyphs">70</text>
<rect x="978.74" y="555" width="1.6" height="8" fill="#b4b4b4"/>
<text x="979.54" y="582.8" font-size="18.8" fill="#d6d6d6" text-anchor="middle" textLength="17.61" lengthAdjust="spacingAndGlyphs">80</text>
<rect x="1042.52" y="555" width="1.6" height="8" fill="#b4b4b4"/>
<text x="1043.32" y="582.8" font-size="18.8" fill="#d6d6d6" text-anchor="middle" textLength="17.61" lengthAdjust="spacingAndGlyphs">90</text>
<rect x="1106.3" y="555" width="1.6" height="8" fill="#b4b4b4"/>
<text x="1107.1" y="582.8" font-size="18.8" fill="#d6d6d6" text-anchor="middle" textLength="26.41" lengthAdjust="spacingAndGlyphs">100</text>
<path d="M470.2 337.66L501.19 341.51L533.08 337.15L564.97 344.13L596.86 345.2L628.75 351L660.64 349.46L692.53 350.23L724.42 352.8L756.31 356.64L788.2 355.1L820.09 352.8L851.98 354.9L883.87 355L915.76 354.9L947.65 355.36L979.54 355.98L1011.43 355.62L1043.32 357.16L1075.21 358.69L1107.1 357.67" fill="none" stroke="#ff0000" stroke-width="3.2" stroke-linejoin="round"/>
<path d="M470.2 337.15L501.19 339.2L533.08 334.58L564.97 341.92L596.86 341.25L628.75 345.87L660.64 346.38L692.53 344.54L724.42 346.38L756.31 349.1L788.2 347.41L820.09 346.74L851.98 346.9L883.87 346.64L915.76 346.38L947.65 347.15L979.54 347.82L1011.43 346.38L1043.32 347.41L1075.21 347.92L1107.1 347.41" fill="none" stroke="#008000" stroke-width="3.2" stroke-linejoin="round"/>
<path d="M470.2 331.51L501.19 336.64L533.08 330.99L564.97 338.69L596.86 337.15L628.75 340.43L660.64 339.2L692.53 338.69L724.42 340.74L756.31 341.51L788.2 340.74L820.09 339.2L851.98 338.18L883.87 337.92L915.76 337.66L947.65 337.15L979.54 336.64L1011.43 335.87L1043.32 335.35L1075.21 336.64L1107.1 335.1" fill="none" stroke="#0000ff" stroke-width="3.2" stroke-linejoin="round"/>
<rect x="469.2" y="143.3" width="639.4" height="3.8" fill="#8e8e8e"/>
<rect x="1106.6" y="145.5" width="1.6" height="409.5" fill="#8e8e8e"/>
<rect x="469.2" y="145.5" width="1.8" height="410.5" fill="#8e8e8e"/>
<rect x="469.2" y="554.2" width="639.4" height="1.8" fill="#8e8e8e"/>
<rect x="1165" y="145.5" width="154.8" height="416.1" fill="#222222"/>
<text x="1232" y="137.5" font-size="18.6" fill="#d6d6d6" text-anchor="middle" textLength="92.5" lengthAdjust="spacingAndGlyphs">RGB Balance</text>
<rect x="1159" y="144.2" width="6" height="1.6" fill="#b4b4b4"/>
<text x="1158.6" y="152.6" font-size="18.8" fill="#d6d6d6" text-anchor="end" textLength="8.8" lengthAdjust="spacingAndGlyphs">4</text>
<rect x="1165" y="197.3" width="154.8" height="1.4" fill="#8e8e8e"/>
<rect x="1159" y="197.2" width="6" height="1.6" fill="#b4b4b4"/>
<text x="1158.6" y="205.6" font-size="18.8" fill="#d6d6d6" text-anchor="end" textLength="8.8" lengthAdjust="spacingAndGlyphs">3</text>
<rect x="1165" y="248.5" width="154.8" height="1.4" fill="#8e8e8e"/>
<rect x="1159" y="248.4" width="6" height="1.6" fill="#b4b4b4"/>
<text x="1158.6" y="256.8" font-size="18.8" fill="#d6d6d6" text-anchor="end" textLength="8.8" lengthAdjust="spacingAndGlyphs">2</text>
<rect x="1165" y="301.4" width="154.8" height="1.4" fill="#8e8e8e"/>
<rect x="1159" y="301.3" width="6" height="1.6" fill="#b4b4b4"/>
<text x="1158.6" y="309.7" font-size="18.8" fill="#d6d6d6" text-anchor="end" textLength="8.8" lengthAdjust="spacingAndGlyphs">1</text>
<rect x="1165" y="353.5" width="154.8" height="1.4" fill="#8e8e8e"/>
<rect x="1159" y="353.4" width="6" height="1.6" fill="#b4b4b4"/>
<text x="1158.6" y="361.8" font-size="18.8" fill="#d6d6d6" text-anchor="end" textLength="8.8" lengthAdjust="spacingAndGlyphs">0</text>
<rect x="1165" y="405.1" width="154.8" height="1.4" fill="#8e8e8e"/>
<rect x="1159" y="405" width="6" height="1.6" fill="#b4b4b4"/>
<text x="1158.6" y="413.4" font-size="18.8" fill="#d6d6d6" text-anchor="end" textLength="14.07" lengthAdjust="spacingAndGlyphs">-1</text>
<rect x="1165" y="457.7" width="154.8" height="1.4" fill="#8e8e8e"/>
<rect x="1159" y="457.6" width="6" height="1.6" fill="#b4b4b4"/>
<text x="1158.6" y="466" font-size="18.8" fill="#d6d6d6" text-anchor="end" textLength="14.07" lengthAdjust="spacingAndGlyphs">-2</text>
<rect x="1165" y="510.2" width="154.8" height="1.4" fill="#8e8e8e"/>
<rect x="1159" y="510.1" width="6" height="1.6" fill="#b4b4b4"/>
<text x="1158.6" y="518.5" font-size="18.8" fill="#d6d6d6" text-anchor="end" textLength="14.07" lengthAdjust="spacingAndGlyphs">-3</text>
<rect x="1159" y="560.8" width="6" height="1.6" fill="#b4b4b4"/>
<text x="1158.6" y="569.2" font-size="18.8" fill="#d6d6d6" text-anchor="end" textLength="14.07" lengthAdjust="spacingAndGlyphs">-4</text>
<rect x="1164.2" y="561.6" width="1.6" height="8" fill="#b4b4b4"/>
<rect x="1319" y="561.6" width="1.6" height="8" fill="#b4b4b4"/>
<text x="1241.7" y="582.8" font-size="18.8" fill="#d6d6d6" text-anchor="middle" textLength="26.41" lengthAdjust="spacingAndGlyphs">100</text>
<defs>
<linearGradient id="br" x1="0" y1="0" x2="0" y2="1"><stop offset="0" stop-color="#ff4a4a"/><stop offset="0.22" stop-color="#ff0000"/><stop offset="0.5" stop-color="#f20808"/><stop offset="1" stop-color="#700000"/></linearGradient>
<linearGradient id="bg" x1="0" y1="0" x2="0" y2="1"><stop offset="0" stop-color="#008800"/><stop offset="1" stop-color="#007000"/></linearGradient>
<linearGradient id="bb" x1="0" y1="0" x2="0" y2="1"><stop offset="0" stop-color="#5a5aff"/><stop offset="0.22" stop-color="#0000ff"/><stop offset="0.5" stop-color="#0000fc"/><stop offset="0.7" stop-color="#0a0adc"/><stop offset="1" stop-color="#000068"/></linearGradient>
</defs>
<rect x="1180.6" y="354.2" width="39.3" height="96" fill="url(#br)" stroke="#000000" stroke-width="1.6"/>
<rect x="1221.6" y="338.6" width="39.8" height="15.6" fill="url(#bg)" stroke="#000000" stroke-width="1.6"/>
<rect x="1262.3" y="210.5" width="39" height="143.7" fill="url(#bb)" stroke="#000000" stroke-width="1.6"/>
<rect x="1164" y="143.3" width="156.8" height="3.8" fill="#8e8e8e"/>
<rect x="1318.8" y="145.5" width="1.6" height="416.1" fill="#8e8e8e"/>
<rect x="1164" y="145.5" width="1.8" height="417.1" fill="#8e8e8e"/>
<rect x="1164" y="560.8" width="156.8" height="1.8" fill="#8e8e8e"/>
<rect x="1385" y="145.5" width="442.3" height="409.1" fill="#222222"/>
<text x="1592" y="137.5" font-size="18.6" fill="#d6d6d6" text-anchor="middle" textLength="120.4" lengthAdjust="spacingAndGlyphs">Gamma Log/Log</text>
<rect x="1379" y="144.2" width="6" height="1.6" fill="#b4b4b4"/>
<text x="1378.4" y="152.6" font-size="18.8" fill="#d6d6d6" text-anchor="end" textLength="22.01" lengthAdjust="spacingAndGlyphs">2.8</text>
<rect x="1385" y="227.6" width="442.3" height="1.4" fill="#8e8e8e"/>
<rect x="1379" y="227.5" width="6" height="1.6" fill="#b4b4b4"/>
<text x="1378.4" y="235.9" font-size="18.8" fill="#d6d6d6" text-anchor="end" textLength="22.01" lengthAdjust="spacingAndGlyphs">2.6</text>
<rect x="1385" y="308.3" width="442.3" height="1.4" fill="#8e8e8e"/>
<rect x="1379" y="308.2" width="6" height="1.6" fill="#b4b4b4"/>
<text x="1378.4" y="316.6" font-size="18.8" fill="#d6d6d6" text-anchor="end" textLength="22.01" lengthAdjust="spacingAndGlyphs">2.4</text>
<rect x="1385" y="390.9" width="442.3" height="1.4" fill="#8e8e8e"/>
<rect x="1379" y="390.8" width="6" height="1.6" fill="#b4b4b4"/>
<text x="1378.4" y="399.2" font-size="18.8" fill="#d6d6d6" text-anchor="end" textLength="22.01" lengthAdjust="spacingAndGlyphs">2.2</text>
<rect x="1385" y="473.7" width="442.3" height="1.4" fill="#8e8e8e"/>
<rect x="1379" y="473.6" width="6" height="1.6" fill="#b4b4b4"/>
<text x="1378.4" y="482" font-size="18.8" fill="#d6d6d6" text-anchor="end" textLength="8.8" lengthAdjust="spacingAndGlyphs">2</text>
<rect x="1379" y="553.7" width="6" height="1.6" fill="#b4b4b4"/>
<text x="1378.4" y="562.1" font-size="18.8" fill="#d6d6d6" text-anchor="end" textLength="22.01" lengthAdjust="spacingAndGlyphs">1.8</text>
<rect x="1384.2" y="554.6" width="1.6" height="8" fill="#b4b4b4"/>
<text x="1385" y="582.8" font-size="18.8" fill="#d6d6d6" text-anchor="middle" textLength="8.8" lengthAdjust="spacingAndGlyphs">0</text>
<rect x="1472.44" y="554.6" width="1.6" height="8" fill="#b4b4b4"/>
<text x="1473.24" y="582.8" font-size="18.8" fill="#d6d6d6" text-anchor="middle" textLength="17.61" lengthAdjust="spacingAndGlyphs">20</text>
<rect x="1560.68" y="554.6" width="1.6" height="8" fill="#b4b4b4"/>
<text x="1561.48" y="582.8" font-size="18.8" fill="#d6d6d6" text-anchor="middle" textLength="17.61" lengthAdjust="spacingAndGlyphs">40</text>
<rect x="1648.92" y="554.6" width="1.6" height="8" fill="#b4b4b4"/>
<text x="1649.72" y="582.8" font-size="18.8" fill="#d6d6d6" text-anchor="middle" textLength="17.61" lengthAdjust="spacingAndGlyphs">60</text>
<rect x="1737.16" y="554.6" width="1.6" height="8" fill="#b4b4b4"/>
<text x="1737.96" y="582.8" font-size="18.8" fill="#d6d6d6" text-anchor="middle" textLength="17.61" lengthAdjust="spacingAndGlyphs">80</text>
<rect x="1825.4" y="554.6" width="1.6" height="8" fill="#b4b4b4"/>
<text x="1826.2" y="582.8" font-size="18.8" fill="#d6d6d6" text-anchor="middle" textLength="26.41" lengthAdjust="spacingAndGlyphs">100</text>
<clipPath id="gclip"><rect x="1385" y="145.5" width="442.3" height="409.1"/></clipPath>
<path d="M1385 770.82L1407.06 558.95L1429.12 491.55L1451.18 453.53L1473.24 434.71L1495.3 414.9L1517.36 406.8L1539.42 401.13L1561.48 391.96L1583.54 383L1605.6 381.53L1627.66 378.65L1649.72 374.13L1671.78 371.66L1693.84 372.07L1715.9 367.96L1737.96 363.44L1760.02 367.96L1782.08 359.33L1804.14 348.23L1826.2 357.69" fill="none" stroke="#8c8c8c" stroke-width="2.9" clip-path="url(#gclip)" stroke-linejoin="round"/>
<path d="M1398.24 580.86L1402.38 554.15L1404.85 538.94L1409.27 519.62L1414.56 501.13L1420.3 485.51L1425.59 474L1435.3 457.97L1445.89 445.23L1462.21 430.85L1476.33 420.57L1491.33 411.12L1504.57 405.36L1534.57 394.27L1560.6 387.03L1577.8 383.17L1598.54 380.5L1623.25 376.59L1649.72 372.89L1693.84 367.55L1737.96 364.26L1782.08 361.39L1826.2 359.33" fill="none" stroke="#ffff00" stroke-width="3.2" clip-path="url(#gclip)" stroke-linejoin="round"/>
<rect x="1384" y="143.3" width="444.3" height="3.8" fill="#8e8e8e"/>
<rect x="1826.3" y="145.5" width="1.6" height="409.1" fill="#8e8e8e"/>
<rect x="1384" y="145.5" width="1.8" height="410.1" fill="#8e8e8e"/>
<rect x="1384" y="553.8" width="444.3" height="1.8" fill="#8e8e8e"/>
<text x="110" y="636.2" font-size="39.3" fill="#f0f0f0" textLength="212" lengthAdjust="spacingAndGlyphs" stroke="#f0f0f0" stroke-width="0.45">Avg dE2000: 1</text>
<text x="553" y="636.2" font-size="39.3" fill="#f0f0f0" textLength="212" lengthAdjust="spacingAndGlyphs" stroke="#f0f0f0" stroke-width="0.45">Avg CCT: 6708</text>
<text x="972" y="636.2" font-size="39.3" fill="#f0f0f0" textLength="306" lengthAdjust="spacingAndGlyphs" stroke="#f0f0f0" stroke-width="0.45">Contrast Ratio: 1153</text>
<text x="1415.5" y="636.2" font-size="39.3" fill="#f0f0f0" textLength="351" lengthAdjust="spacingAndGlyphs" stroke="#f0f0f0" stroke-width="0.45">Average Gamma: 2.174</text>
<rect x="0" y="661.7" width="1858" height="169" fill="#000000"/>
<rect x="0" y="661.7" width="1.2" height="169" fill="#2a2a2a"/>
<rect x="126" y="669" width="70.5" height="131.8" fill="#000000"/>
<rect x="126" y="669" width="70.5" height="66" fill="#010202"/>
<rect x="126.6" y="669.6" width="69.3" height="130.6" fill="none" stroke="#e4e4e4" stroke-width="1.3"/>
<text x="161.2" y="820" font-size="14.6" fill="#f0f0f0" text-anchor="middle" textLength="7.6" lengthAdjust="spacingAndGlyphs">0</text>
<rect x="207.9" y="669" width="70.5" height="131.8" fill="#0d0d0d"/>
<rect x="207.9" y="669" width="70.5" height="66" fill="#0e0f0f"/>
<rect x="208.5" y="669.6" width="69.3" height="130.6" fill="none" stroke="#e4e4e4" stroke-width="1.3"/>
<text x="243.1" y="820" font-size="14.6" fill="#f0f0f0" text-anchor="middle" textLength="7.6" lengthAdjust="spacingAndGlyphs">5</text>
<rect x="289.8" y="669" width="70.5" height="131.8" fill="#1a1a1a"/>
<rect x="289.8" y="669" width="70.5" height="66" fill="#1b1c1d"/>
<rect x="290.4" y="669.6" width="69.3" height="130.6" fill="none" stroke="#e4e4e4" stroke-width="1.3"/>
<text x="325" y="820" font-size="14.6" fill="#f0f0f0" text-anchor="middle" textLength="15.2" lengthAdjust="spacingAndGlyphs">10</text>
<rect x="371.7" y="669" width="70.5" height="131.8" fill="#262626"/>
<rect x="371.7" y="669" width="70.5" height="66" fill="#272829"/>
<rect x="372.3" y="669.6" width="69.3" height="130.6" fill="none" stroke="#e4e4e4" stroke-width="1.3"/>
<text x="406.9" y="820" font-size="14.6" fill="#f0f0f0" text-anchor="middle" textLength="15.2" lengthAdjust="spacingAndGlyphs">15</text>
<rect x="453.6" y="669" width="70.5" height="131.8" fill="#333333"/>
<rect x="453.6" y="669" width="70.5" height="66" fill="#343537"/>
<rect x="454.2" y="669.6" width="69.3" height="130.6" fill="none" stroke="#e4e4e4" stroke-width="1.3"/>
<text x="488.8" y="820" font-size="14.6" fill="#f0f0f0" text-anchor="middle" textLength="15.2" lengthAdjust="spacingAndGlyphs">20</text>
<rect x="535.5" y="669" width="70.5" height="131.8" fill="#404040"/>
<rect x="535.5" y="669" width="70.5" height="66" fill="#414244"/>
<rect x="536.1" y="669.6" width="69.3" height="130.6" fill="none" stroke="#e4e4e4" stroke-width="1.3"/>
<text x="570.7" y="820" font-size="14.6" fill="#f0f0f0" text-anchor="middle" textLength="15.2" lengthAdjust="spacingAndGlyphs">25</text>
<rect x="617.4" y="669" width="70.5" height="131.8" fill="#4c4c4c"/>
<rect x="617.4" y="669" width="70.5" height="66" fill="#4d4e50"/>
<rect x="618" y="669.6" width="69.3" height="130.6" fill="none" stroke="#e4e4e4" stroke-width="1.3"/>
<text x="652.6" y="820" font-size="14.6" fill="#f0f0f0" text-anchor="middle" textLength="15.2" lengthAdjust="spacingAndGlyphs">30</text>
<rect x="699.3" y="669" width="70.5" height="131.8" fill="#595959"/>
<rect x="699.3" y="669" width="70.5" height="66" fill="#5a5b5d"/>
<rect x="699.9" y="669.6" width="69.3" height="130.6" fill="none" stroke="#e4e4e4" stroke-width="1.3"/>
<text x="734.5" y="820" font-size="14.6" fill="#f0f0f0" text-anchor="middle" textLength="15.2" lengthAdjust="spacingAndGlyphs">35</text>
<rect x="781.2" y="669" width="70.5" height="131.8" fill="#666666"/>
<rect x="781.2" y="669" width="70.5" height="66" fill="#67686a"/>
<rect x="781.8" y="669.6" width="69.3" height="130.6" fill="none" stroke="#e4e4e4" stroke-width="1.3"/>
<text x="816.4" y="820" font-size="14.6" fill="#f0f0f0" text-anchor="middle" textLength="15.2" lengthAdjust="spacingAndGlyphs">40</text>
<rect x="863.1" y="669" width="70.5" height="131.8" fill="#737373"/>
<rect x="863.1" y="669" width="70.5" height="66" fill="#747577"/>
<rect x="863.7" y="669.6" width="69.3" height="130.6" fill="none" stroke="#e4e4e4" stroke-width="1.3"/>
<text x="898.3" y="820" font-size="14.6" fill="#f0f0f0" text-anchor="middle" textLength="15.2" lengthAdjust="spacingAndGlyphs">45</text>
<rect x="945" y="669" width="70.5" height="131.8" fill="#7f7f7f"/>
<rect x="945" y="669" width="70.5" height="66" fill="#7e7f81"/>
<rect x="945.6" y="669.6" width="69.3" height="130.6" fill="none" stroke="#e4e4e4" stroke-width="1.3"/>
<text x="980.2" y="820" font-size="14.6" fill="#f0f0f0" text-anchor="middle" textLength="15.2" lengthAdjust="spacingAndGlyphs">50</text>
<rect x="1026.9" y="669" width="70.5" height="131.8" fill="#8c8c8c"/>
<rect x="1026.9" y="669" width="70.5" height="66" fill="#8b8c8e"/>
<rect x="1027.5" y="669.6" width="69.3" height="130.6" fill="none" stroke="#e4e4e4" stroke-width="1.3"/>
<text x="1062.1" y="820" font-size="14.6" fill="#f0f0f0" text-anchor="middle" textLength="15.2" lengthAdjust="spacingAndGlyphs">55</text>
<rect x="1108.8" y="669" width="70.5" height="131.8" fill="#999999"/>
<rect x="1108.8" y="669" width="70.5" height="66" fill="#98999b"/>
<rect x="1109.4" y="669.6" width="69.3" height="130.6" fill="none" stroke="#e4e4e4" stroke-width="1.3"/>
<text x="1144" y="820" font-size="14.6" fill="#f0f0f0" text-anchor="middle" textLength="15.2" lengthAdjust="spacingAndGlyphs">60</text>
<rect x="1190.7" y="669" width="70.5" height="131.8" fill="#a6a6a6"/>
<rect x="1190.7" y="669" width="70.5" height="66" fill="#a5a6a9"/>
<rect x="1191.3" y="669.6" width="69.3" height="130.6" fill="none" stroke="#e4e4e4" stroke-width="1.3"/>
<text x="1225.9" y="820" font-size="14.6" fill="#f0f0f0" text-anchor="middle" textLength="15.2" lengthAdjust="spacingAndGlyphs">65</text>
<rect x="1272.6" y="669" width="70.5" height="131.8" fill="#b2b2b2"/>
<rect x="1272.6" y="669" width="70.5" height="66" fill="#b1b2b5"/>
<rect x="1273.2" y="669.6" width="69.3" height="130.6" fill="none" stroke="#e4e4e4" stroke-width="1.3"/>
<text x="1307.8" y="820" font-size="14.6" fill="#f0f0f0" text-anchor="middle" textLength="15.2" lengthAdjust="spacingAndGlyphs">70</text>
<rect x="1354.5" y="669" width="70.5" height="131.8" fill="#bfbfbf"/>
<rect x="1354.5" y="669" width="70.5" height="66" fill="#bebfc2"/>
<rect x="1355.1" y="669.6" width="69.3" height="130.6" fill="none" stroke="#e4e4e4" stroke-width="1.3"/>
<text x="1389.7" y="820" font-size="14.6" fill="#f0f0f0" text-anchor="middle" textLength="15.2" lengthAdjust="spacingAndGlyphs">75</text>
<rect x="1436.4" y="669" width="70.5" height="131.8" fill="#cccccc"/>
<rect x="1436.4" y="669" width="70.5" height="66" fill="#cbcccf"/>
<rect x="1437" y="669.6" width="69.3" height="130.6" fill="none" stroke="#e4e4e4" stroke-width="1.3"/>
<text x="1471.6" y="820" font-size="14.6" fill="#f0f0f0" text-anchor="middle" textLength="15.2" lengthAdjust="spacingAndGlyphs">80</text>
<rect x="1518.3" y="669" width="70.5" height="131.8" fill="#d9d9d9"/>
<rect x="1518.3" y="669" width="70.5" height="66" fill="#d8d9dc"/>
<rect x="1518.9" y="669.6" width="69.3" height="130.6" fill="none" stroke="#e4e4e4" stroke-width="1.3"/>
<text x="1553.5" y="820" font-size="14.6" fill="#f0f0f0" text-anchor="middle" textLength="15.2" lengthAdjust="spacingAndGlyphs">85</text>
<rect x="1600.2" y="669" width="70.5" height="131.8" fill="#e5e5e5"/>
<rect x="1600.2" y="669" width="70.5" height="66" fill="#e4e5e8"/>
<rect x="1600.8" y="669.6" width="69.3" height="130.6" fill="none" stroke="#e4e4e4" stroke-width="1.3"/>
<text x="1635.4" y="820" font-size="14.6" fill="#f0f0f0" text-anchor="middle" textLength="15.2" lengthAdjust="spacingAndGlyphs">90</text>
<rect x="1682.1" y="669" width="70.5" height="131.8" fill="#f2f2f2"/>
<rect x="1682.1" y="669" width="70.5" height="66" fill="#f1f2f5"/>
<rect x="1682.7" y="669.6" width="69.3" height="130.6" fill="none" stroke="#e4e4e4" stroke-width="1.3"/>
<text x="1717.3" y="820" font-size="14.6" fill="#f0f0f0" text-anchor="middle" textLength="15.2" lengthAdjust="spacingAndGlyphs">95</text>
<rect x="1764" y="669" width="70.5" height="131.8" fill="#ffffff"/>
<rect x="1764" y="669" width="70.5" height="66" fill="#feffff"/>
<rect x="1764.6" y="669.6" width="69.3" height="130.6" fill="none" stroke="#e4e4e4" stroke-width="1.3"/>
<text x="1799.2" y="820" font-size="14.6" fill="#f0f0f0" text-anchor="middle" textLength="22.8" lengthAdjust="spacingAndGlyphs">100</text>
<text transform="translate(121.6,720.4) rotate(-90)" font-size="13.6" fill="#f0f0f0" stroke="#f0f0f0" stroke-width="0.3" textLength="44.5" lengthAdjust="spacingAndGlyphs">Actual</text>
<text transform="translate(121.6,793.6) rotate(-90)" font-size="13.6" fill="#f0f0f0" stroke="#f0f0f0" stroke-width="0.3" textLength="43.5" lengthAdjust="spacingAndGlyphs">Target</text>
<text x="24.5" y="917.5" font-size="38" fill="#f0f0f0" textLength="243.5" lengthAdjust="spacingAndGlyphs" stroke="#f0f0f0" stroke-width="0.45">Current Reading</text>
<text x="24.5" y="972.3" font-size="32.4" fill="#f0f0f0" textLength="111.9" lengthAdjust="spacingAndGlyphs" stroke="#f0f0f0" stroke-width="0.3">x: 0.3097</text>
<text x="191" y="972.3" font-size="32.4" fill="#f0f0f0" textLength="114.4" lengthAdjust="spacingAndGlyphs" stroke="#f0f0f0" stroke-width="0.3">y: 0.3266</text>
<text x="24.5" y="1016.3" font-size="32.4" fill="#f0f0f0" textLength="123.3" lengthAdjust="spacingAndGlyphs" stroke="#f0f0f0" stroke-width="0.3">u&#x27;: 0.1966</text>
<text x="191" y="1016.3" font-size="32.4" fill="#f0f0f0" textLength="121" lengthAdjust="spacingAndGlyphs" stroke="#f0f0f0" stroke-width="0.3">v&#x27;: 0.4666</text>
<text x="24.5" y="1059.9" font-size="32.4" fill="#f0f0f0" textLength="207.3" lengthAdjust="spacingAndGlyphs" stroke="#f0f0f0" stroke-width="0.3">cd/m²: 506.4277</text>
<text x="24.5" y="1103.7" font-size="32.4" fill="#f0f0f0" textLength="169.8" lengthAdjust="spacingAndGlyphs" stroke="#f0f0f0" stroke-width="0.3">ΔE 2000: 1.57</text>
<text x="527.5" y="873.8" font-size="18.6" fill="#d6d6d6" text-anchor="middle" textLength="84.5" lengthAdjust="spacingAndGlyphs">CIE 1931 xy</text>
<rect x="406.3" y="879.8" width="280.6" height="214.8" fill="none" stroke="#8a8a8a" stroke-width="1.6"/>
<clipPath id="cclip"><rect x="407.1" y="880.6" width="279" height="213.2"/></clipPath>
<path d="M815.13 838.26L786.6 854.26L759.94 869.74L734.99 884.68L711.62 899.1L689.7 912.98L669.12 926.35L649.78 939.2L631.58 951.57L614.43 963.45L598.25 974.87L582.98 985.85L568.54 996.39L554.88 1006.53L541.93 1016.27L529.66 1025.63L518.02 1034.63L506.95 1043.28L496.43 1051.61L486.41 1059.62L476.87 1067.33L467.78 1074.75L459.1 1081.9L450.81 1088.79L442.88 1095.43L435.31 1101.83L428.05 1108L421.1 1113.96L414.44 1119.71L408.06 1125.26L401.93 1130.62" fill="none" stroke="#000000" stroke-width="3.5" clip-path="url(#cclip)" stroke-linejoin="round"/>
<rect x="399.8" y="940.7" width="6.5" height="1.6" fill="#b4b4b4"/>
<text x="399" y="948.7" font-size="18.2" fill="#d6d6d6" text-anchor="end" textLength="31.4" lengthAdjust="spacingAndGlyphs">0.34</text>
<rect x="399.8" y="1026.8" width="6.5" height="1.6" fill="#b4b4b4"/>
<text x="399" y="1034.8" font-size="18.2" fill="#d6d6d6" text-anchor="end" textLength="31.4" lengthAdjust="spacingAndGlyphs">0.32</text>
<rect x="418" y="1094.6" width="1.6" height="7" fill="#b4b4b4"/>
<text x="418.8" y="1121.6" font-size="18.2" fill="#d6d6d6" text-anchor="middle" textLength="31.4" lengthAdjust="spacingAndGlyphs">0.29</text>
<rect x="474.2" y="1094.6" width="1.6" height="7" fill="#b4b4b4"/>
<text x="475" y="1121.6" font-size="18.2" fill="#d6d6d6" text-anchor="middle" textLength="21.6" lengthAdjust="spacingAndGlyphs">0.3</text>
<rect x="530.4" y="1094.6" width="1.6" height="7" fill="#b4b4b4"/>
<text x="531.2" y="1121.6" font-size="18.2" fill="#d6d6d6" text-anchor="middle" textLength="31.4" lengthAdjust="spacingAndGlyphs">0.31</text>
<rect x="586.2" y="1094.6" width="1.6" height="7" fill="#b4b4b4"/>
<text x="587" y="1121.6" font-size="18.2" fill="#d6d6d6" text-anchor="middle" textLength="31.4" lengthAdjust="spacingAndGlyphs">0.32</text>
<rect x="642.2" y="1094.6" width="1.6" height="7" fill="#b4b4b4"/>
<text x="643" y="1121.6" font-size="18.2" fill="#d6d6d6" text-anchor="middle" textLength="31.4" lengthAdjust="spacingAndGlyphs">0.33</text>
<circle cx="511.84" cy="989.41" r="4.7" fill="#0c0c0c" stroke="#101010" stroke-width="1.3"/>
<circle cx="524.73" cy="999.75" r="5" fill="#1a1a1a" stroke="#161616" stroke-width="1.7"/>
<circle cx="532.02" cy="997.16" r="5" fill="#262626" stroke="#161616" stroke-width="1.7"/>
<circle cx="528.1" cy="997.16" r="5" fill="#333333" stroke="#161616" stroke-width="1.7"/>
<circle cx="525.3" cy="999.75" r="5" fill="#404040" stroke="#161616" stroke-width="1.7"/>
<circle cx="529.22" cy="1001.04" r="5" fill="#424242" stroke="#161616" stroke-width="1.7"/>
<circle cx="527.54" cy="997.16" r="5" fill="#424242" stroke="#161616" stroke-width="1.7"/>
<circle cx="528.1" cy="996.3" r="5" fill="#424242" stroke="#161616" stroke-width="1.7"/>
<circle cx="525.86" cy="998.89" r="5" fill="#424242" stroke="#161616" stroke-width="1.7"/>
<circle cx="528.66" cy="996.3" r="5" fill="#424242" stroke="#161616" stroke-width="1.7"/>
<circle cx="529.78" cy="998.89" r="5" fill="#424242" stroke="#161616" stroke-width="1.7"/>
<circle cx="528.66" cy="1001.47" r="5" fill="#424242" stroke="#161616" stroke-width="1.7"/>
<circle cx="530.34" cy="1002.33" r="5" fill="#424242" stroke="#161616" stroke-width="1.7"/>
<circle cx="526.98" cy="1000.18" r="5" fill="#424242" stroke="#161616" stroke-width="1.7"/>
<circle cx="530.9" cy="999.75" r="5" fill="#424242" stroke="#161616" stroke-width="1.7"/>
<circle cx="529.22" cy="1002.76" r="5" fill="#424242" stroke="#161616" stroke-width="1.7"/>
<circle cx="528.1" cy="1000.61" r="5" fill="#424242" stroke="#161616" stroke-width="1.7"/>
<circle cx="529.78" cy="998.46" r="5" fill="#424242" stroke="#161616" stroke-width="1.7"/>
<circle cx="528.66" cy="998.89" r="5" fill="#424242" stroke="#161616" stroke-width="1.7"/>
<circle cx="529.22" cy="997.16" r="5.2" fill="#ffffff" stroke="#141414" stroke-width="1.6"/>
<rect x="539.1" y="977.1" width="14" height="17" fill="none" stroke="#000000" stroke-width="1.9"/>
<defs>
<linearGradient id="th" x1="0" y1="0" x2="0" y2="1"><stop offset="0" stop-color="#2b2b2b"/><stop offset="0.47" stop-color="#252525"/><stop offset="0.48" stop-color="#141414"/><stop offset="1" stop-color="#131313"/></linearGradient>
</defs>
<rect x="699.4" y="843.4" width="15.6" height="35.9" fill="#000000"/>
<rect x="715" y="843.4" width="1132.8" height="35.9" fill="url(#th)"/>
<clipPath id="tclip"><rect x="715" y="840" width="1132.8" height="280"/></clipPath>
<rect x="699.4" y="879.3" width="15.6" height="33.7" fill="#2a2a2a"/>
<rect x="699.4" y="913" width="15.6" height="32.8" fill="#2f2f2f"/>
<rect x="699.4" y="945.8" width="15.6" height="33.4" fill="#2c2c2c"/>
<rect x="699.4" y="979.2" width="15.6" height="33.8" fill="#313131"/>
<rect x="699.4" y="1013" width="15.6" height="33.4" fill="#2e2e2e"/>
<rect x="699.4" y="1046.4" width="15.6" height="32.6" fill="#333333"/>
<rect x="699.4" y="1079" width="15.6" height="33" fill="#303030"/>
<g clip-path="url(#tclip)">
<text x="863.6" y="869.6" font-size="22.4" fill="#f4f4f4" textLength="9.6" lengthAdjust="spacingAndGlyphs">0</text>
<text x="966.6" y="869.6" font-size="22.4" fill="#f4f4f4" textLength="9.6" lengthAdjust="spacingAndGlyphs">5</text>
<text x="1059.7" y="869.6" font-size="22.4" fill="#f4f4f4" textLength="19.2" lengthAdjust="spacingAndGlyphs">10</text>
<text x="1152.7" y="869.6" font-size="22.4" fill="#f4f4f4" textLength="19.2" lengthAdjust="spacingAndGlyphs">15</text>
<text x="1245.7" y="869.6" font-size="22.4" fill="#f4f4f4" textLength="19.2" lengthAdjust="spacingAndGlyphs">20</text>
<text x="1338.9" y="869.6" font-size="22.4" fill="#f4f4f4" textLength="19.2" lengthAdjust="spacingAndGlyphs">25</text>
<text x="1431.6" y="869.6" font-size="22.4" fill="#f4f4f4" textLength="19.2" lengthAdjust="spacingAndGlyphs">30</text>
<text x="1524.6" y="869.6" font-size="22.4" fill="#f4f4f4" textLength="19.2" lengthAdjust="spacingAndGlyphs">35</text>
<text x="1617.7" y="869.6" font-size="22.4" fill="#f4f4f4" textLength="19.2" lengthAdjust="spacingAndGlyphs">40</text>
<text x="1710.7" y="869.6" font-size="22.4" fill="#f4f4f4" textLength="19.2" lengthAdjust="spacingAndGlyphs">45</text>
<text x="1803.8" y="869.6" font-size="22.4" fill="#f4f4f4" textLength="19.2" lengthAdjust="spacingAndGlyphs">50</text>
<rect x="715" y="879.3" width="1132.8" height="33.7" fill="#3d3d3d"/>
<text x="719.4" y="904.55" font-size="22.4" fill="#f4f4f4" textLength="60.6" lengthAdjust="spacingAndGlyphs">x: CIE31</text>
<text x="863.6" y="904.55" font-size="22.4" fill="#f4f4f4" textLength="52.79" lengthAdjust="spacingAndGlyphs">0.2849</text>
<text x="966.6" y="904.55" font-size="22.4" fill="#f4f4f4" textLength="52.79" lengthAdjust="spacingAndGlyphs">0.3066</text>
<text x="1059.7" y="904.55" font-size="22.4" fill="#f4f4f4" textLength="52.79" lengthAdjust="spacingAndGlyphs">0.3089</text>
<text x="1152.7" y="904.55" font-size="22.4" fill="#f4f4f4" textLength="52.79" lengthAdjust="spacingAndGlyphs">0.3102</text>
<text x="1245.7" y="904.55" font-size="22.4" fill="#f4f4f4" textLength="52.79" lengthAdjust="spacingAndGlyphs">0.3095</text>
<text x="1338.9" y="904.55" font-size="22.4" fill="#f4f4f4" textLength="52.79" lengthAdjust="spacingAndGlyphs">0.3090</text>
<text x="1431.6" y="904.55" font-size="22.4" fill="#f4f4f4" textLength="52.79" lengthAdjust="spacingAndGlyphs">0.3097</text>
<text x="1524.6" y="904.55" font-size="22.4" fill="#f4f4f4" textLength="52.79" lengthAdjust="spacingAndGlyphs">0.3094</text>
<text x="1617.7" y="904.55" font-size="22.4" fill="#f4f4f4" textLength="52.79" lengthAdjust="spacingAndGlyphs">0.3095</text>
<text x="1710.7" y="904.55" font-size="22.4" fill="#f4f4f4" textLength="52.79" lengthAdjust="spacingAndGlyphs">0.3091</text>
<text x="1803.8" y="904.55" font-size="22.4" fill="#f4f4f4" textLength="52.79" lengthAdjust="spacingAndGlyphs">0.3096</text>
<rect x="715" y="913" width="1132.8" height="32.8" fill="#808080"/>
<text x="719.4" y="937.8" font-size="22.4" fill="#f4f4f4" textLength="60.6" lengthAdjust="spacingAndGlyphs">y: CIE31</text>
<text x="863.6" y="937.8" font-size="22.4" fill="#f4f4f4" textLength="52.79" lengthAdjust="spacingAndGlyphs">0.2743</text>
<text x="966.6" y="937.8" font-size="22.4" fill="#f4f4f4" textLength="52.79" lengthAdjust="spacingAndGlyphs">0.3284</text>
<text x="1059.7" y="937.8" font-size="22.4" fill="#f4f4f4" textLength="52.79" lengthAdjust="spacingAndGlyphs">0.3260</text>
<text x="1152.7" y="937.8" font-size="22.4" fill="#f4f4f4" textLength="52.79" lengthAdjust="spacingAndGlyphs">0.3266</text>
<text x="1245.7" y="937.8" font-size="22.4" fill="#f4f4f4" textLength="52.79" lengthAdjust="spacingAndGlyphs">0.3266</text>
<text x="1338.9" y="937.8" font-size="22.4" fill="#f4f4f4" textLength="52.79" lengthAdjust="spacingAndGlyphs">0.3260</text>
<text x="1431.6" y="937.8" font-size="22.4" fill="#f4f4f4" textLength="52.79" lengthAdjust="spacingAndGlyphs">0.3257</text>
<text x="1524.6" y="937.8" font-size="22.4" fill="#f4f4f4" textLength="52.79" lengthAdjust="spacingAndGlyphs">0.3266</text>
<text x="1617.7" y="937.8" font-size="22.4" fill="#f4f4f4" textLength="52.79" lengthAdjust="spacingAndGlyphs">0.3268</text>
<text x="1710.7" y="937.8" font-size="22.4" fill="#f4f4f4" textLength="52.79" lengthAdjust="spacingAndGlyphs">0.3262</text>
<text x="1803.8" y="937.8" font-size="22.4" fill="#f4f4f4" textLength="52.79" lengthAdjust="spacingAndGlyphs">0.3268</text>
<rect x="715" y="945.8" width="1132.8" height="33.4" fill="#3d3d3d"/>
<text x="719.4" y="970.9" font-size="22.4" fill="#f4f4f4" textLength="8.6" lengthAdjust="spacingAndGlyphs">Y</text>
<text x="863.6" y="970.9" font-size="22.4" fill="#f4f4f4" textLength="52.79" lengthAdjust="spacingAndGlyphs">0.4391</text>
<text x="966.6" y="970.9" font-size="22.4" fill="#f4f4f4" textLength="52.79" lengthAdjust="spacingAndGlyphs">2.4353</text>
<text x="1059.7" y="970.9" font-size="22.4" fill="#f4f4f4" textLength="52.79" lengthAdjust="spacingAndGlyphs">5.8044</text>
<text x="1152.7" y="970.9" font-size="22.4" fill="#f4f4f4" textLength="62.39" lengthAdjust="spacingAndGlyphs">10.2284</text>
<text x="1245.7" y="970.9" font-size="22.4" fill="#f4f4f4" textLength="62.39" lengthAdjust="spacingAndGlyphs">17.3673</text>
<text x="1338.9" y="970.9" font-size="22.4" fill="#f4f4f4" textLength="62.39" lengthAdjust="spacingAndGlyphs">26.1496</text>
<text x="1431.6" y="970.9" font-size="22.4" fill="#f4f4f4" textLength="62.39" lengthAdjust="spacingAndGlyphs">36.9090</text>
<text x="1524.6" y="970.9" font-size="22.4" fill="#f4f4f4" textLength="62.39" lengthAdjust="spacingAndGlyphs">51.1872</text>
<text x="1617.7" y="970.9" font-size="22.4" fill="#f4f4f4" textLength="62.39" lengthAdjust="spacingAndGlyphs">67.4849</text>
<text x="1710.7" y="970.9" font-size="22.4" fill="#f4f4f4" textLength="62.39" lengthAdjust="spacingAndGlyphs">86.3530</text>
<text x="1803.8" y="970.9" font-size="22.4" fill="#f4f4f4" textLength="71.99" lengthAdjust="spacingAndGlyphs">109.2353</text>
<rect x="715" y="979.2" width="1132.8" height="33.8" fill="#808080"/>
<text x="719.4" y="1004.5" font-size="22.4" fill="#f4f4f4" textLength="64" lengthAdjust="spacingAndGlyphs">Target Y</text>
<text x="863.6" y="1004.5" font-size="22.4" fill="#f4f4f4" textLength="52.79" lengthAdjust="spacingAndGlyphs">0.0000</text>
<text x="966.6" y="1004.5" font-size="22.4" fill="#f4f4f4" textLength="52.79" lengthAdjust="spacingAndGlyphs">2.0382</text>
<text x="1059.7" y="1004.5" font-size="22.4" fill="#f4f4f4" textLength="52.79" lengthAdjust="spacingAndGlyphs">5.2313</text>
<text x="1152.7" y="1004.5" font-size="22.4" fill="#f4f4f4" textLength="52.79" lengthAdjust="spacingAndGlyphs">9.8158</text>
<text x="1245.7" y="1004.5" font-size="22.4" fill="#f4f4f4" textLength="62.39" lengthAdjust="spacingAndGlyphs">16.7652</text>
<text x="1338.9" y="1004.5" font-size="22.4" fill="#f4f4f4" textLength="62.39" lengthAdjust="spacingAndGlyphs">25.9643</text>
<text x="1431.6" y="1004.5" font-size="22.4" fill="#f4f4f4" textLength="62.39" lengthAdjust="spacingAndGlyphs">36.6005</text>
<text x="1524.6" y="1004.5" font-size="22.4" fill="#f4f4f4" textLength="62.39" lengthAdjust="spacingAndGlyphs">50.5915</text>
<text x="1617.7" y="1004.5" font-size="22.4" fill="#f4f4f4" textLength="62.39" lengthAdjust="spacingAndGlyphs">67.2882</text>
<text x="1710.7" y="1004.5" font-size="22.4" fill="#f4f4f4" textLength="62.39" lengthAdjust="spacingAndGlyphs">86.8225</text>
<text x="1803.8" y="1004.5" font-size="22.4" fill="#f4f4f4" textLength="71.99" lengthAdjust="spacingAndGlyphs">109.3180</text>
<rect x="715" y="1013" width="1132.8" height="33.4" fill="#3d3d3d"/>
<text x="719.4" y="1038.1" font-size="22.4" fill="#f4f4f4" textLength="133.3" lengthAdjust="spacingAndGlyphs">Gamma Log/Log</text>
<text x="863.6" y="1038.1" font-size="22.4" fill="#f4f4f4" textLength="52.79" lengthAdjust="spacingAndGlyphs">1.2778</text>
<text x="966.6" y="1038.1" font-size="22.4" fill="#f4f4f4" textLength="52.79" lengthAdjust="spacingAndGlyphs">1.7933</text>
<text x="1059.7" y="1038.1" font-size="22.4" fill="#f4f4f4" textLength="52.79" lengthAdjust="spacingAndGlyphs">1.9573</text>
<text x="1152.7" y="1038.1" font-size="22.4" fill="#f4f4f4" textLength="52.79" lengthAdjust="spacingAndGlyphs">2.0498</text>
<text x="1245.7" y="1038.1" font-size="22.4" fill="#f4f4f4" textLength="52.79" lengthAdjust="spacingAndGlyphs">2.0956</text>
<text x="1338.9" y="1038.1" font-size="22.4" fill="#f4f4f4" textLength="52.79" lengthAdjust="spacingAndGlyphs">2.1438</text>
<text x="1431.6" y="1038.1" font-size="22.4" fill="#f4f4f4" textLength="52.79" lengthAdjust="spacingAndGlyphs">2.1635</text>
<text x="1524.6" y="1038.1" font-size="22.4" fill="#f4f4f4" textLength="52.79" lengthAdjust="spacingAndGlyphs">2.1773</text>
<text x="1617.7" y="1038.1" font-size="22.4" fill="#f4f4f4" textLength="52.79" lengthAdjust="spacingAndGlyphs">2.1996</text>
<text x="1710.7" y="1038.1" font-size="22.4" fill="#f4f4f4" textLength="52.79" lengthAdjust="spacingAndGlyphs">2.2214</text>
<text x="1803.8" y="1038.1" font-size="22.4" fill="#f4f4f4" textLength="52.79" lengthAdjust="spacingAndGlyphs">2.2253</text>
<rect x="715" y="1046.4" width="1132.8" height="32.6" fill="#808080"/>
<text x="719.4" y="1071.1" font-size="22.4" fill="#f4f4f4" textLength="30.5" lengthAdjust="spacingAndGlyphs">CCT</text>
<text x="863.6" y="1071.1" font-size="22.4" fill="#f4f4f4" textLength="91.18" lengthAdjust="spacingAndGlyphs">10247.0000</text>
<text x="966.6" y="1071.1" font-size="22.4" fill="#f4f4f4" textLength="81.59" lengthAdjust="spacingAndGlyphs">6850.0000</text>
<text x="1059.7" y="1071.1" font-size="22.4" fill="#f4f4f4" textLength="81.59" lengthAdjust="spacingAndGlyphs">6740.0000</text>
<text x="1152.7" y="1071.1" font-size="22.4" fill="#f4f4f4" textLength="81.59" lengthAdjust="spacingAndGlyphs">6660.0000</text>
<text x="1245.7" y="1071.1" font-size="22.4" fill="#f4f4f4" textLength="81.59" lengthAdjust="spacingAndGlyphs">6703.0000</text>
<text x="1338.9" y="1071.1" font-size="22.4" fill="#f4f4f4" textLength="81.59" lengthAdjust="spacingAndGlyphs">6734.0000</text>
<text x="1431.6" y="1071.1" font-size="22.4" fill="#f4f4f4" textLength="81.59" lengthAdjust="spacingAndGlyphs">6698.0000</text>
<text x="1524.6" y="1071.1" font-size="22.4" fill="#f4f4f4" textLength="81.59" lengthAdjust="spacingAndGlyphs">6709.0000</text>
<text x="1617.7" y="1071.1" font-size="22.4" fill="#f4f4f4" textLength="81.59" lengthAdjust="spacingAndGlyphs">6700.0000</text>
<text x="1710.7" y="1071.1" font-size="22.4" fill="#f4f4f4" textLength="81.59" lengthAdjust="spacingAndGlyphs">6729.0000</text>
<text x="1803.8" y="1071.1" font-size="22.4" fill="#f4f4f4" textLength="81.59" lengthAdjust="spacingAndGlyphs">6696.0000</text>
<rect x="715" y="1079" width="1132.8" height="33" fill="#3d3d3d"/>
<text x="719.4" y="1103.9" font-size="22.4" fill="#f4f4f4" textLength="64" lengthAdjust="spacingAndGlyphs">ΔE 2000</text>
<text x="863.6" y="1103.9" font-size="22.4" fill="#f4f4f4" textLength="52.79" lengthAdjust="spacingAndGlyphs">0.9024</text>
<text x="966.6" y="1103.9" font-size="22.4" fill="#f4f4f4" textLength="52.79" lengthAdjust="spacingAndGlyphs">0.6647</text>
<text x="1059.7" y="1103.9" font-size="22.4" fill="#f4f4f4" textLength="52.79" lengthAdjust="spacingAndGlyphs">0.7146</text>
<text x="1152.7" y="1103.9" font-size="22.4" fill="#f4f4f4" textLength="52.79" lengthAdjust="spacingAndGlyphs">0.4755</text>
<text x="1245.7" y="1103.9" font-size="22.4" fill="#f4f4f4" textLength="52.79" lengthAdjust="spacingAndGlyphs">0.6319</text>
<text x="1338.9" y="1103.9" font-size="22.4" fill="#f4f4f4" textLength="52.79" lengthAdjust="spacingAndGlyphs">0.7230</text>
<text x="1431.6" y="1103.9" font-size="22.4" fill="#f4f4f4" textLength="52.79" lengthAdjust="spacingAndGlyphs">0.7741</text>
<text x="1524.6" y="1103.9" font-size="22.4" fill="#f4f4f4" textLength="52.79" lengthAdjust="spacingAndGlyphs">0.8239</text>
<text x="1617.7" y="1103.9" font-size="22.4" fill="#f4f4f4" textLength="52.79" lengthAdjust="spacingAndGlyphs">0.8518</text>
<text x="1710.7" y="1103.9" font-size="22.4" fill="#f4f4f4" textLength="52.79" lengthAdjust="spacingAndGlyphs">1.0453</text>
<text x="1803.8" y="1103.9" font-size="22.4" fill="#f4f4f4" textLength="52.79" lengthAdjust="spacingAndGlyphs">0.9722</text>
</g>
<rect x="715" y="1112" width="1132.8" height="21" fill="#5e5e5e"/>
<rect x="715.5" y="1113" width="17.5" height="19" fill="#7a7a7a" rx="3"/>
<polygon points="727.5,1116.5 727.5,1128.5 721,1122.5" fill="#2c2c2c"/>
<rect x="734.5" y="1113.5" width="590.5" height="18" fill="#686868" rx="7"/>
<rect x="1832" y="1113.6" width="14.6" height="17.8" fill="#7c7c7c" rx="3" stroke="#8a8a8a" stroke-width="0.8"/>
<polygon points="1836.3,1116.4 1836.3,1128.8 1842.4,1122.6" fill="#3c3c3c"/>
<defs>
<linearGradient id="bbtn" x1="0" y1="0" x2="0" y2="1"><stop offset="0" stop-color="#a2a2a2"/><stop offset="0.08" stop-color="#949494"/><stop offset="1" stop-color="#5a5a5a"/></linearGradient>
<linearGradient id="bsel" x1="0" y1="0" x2="0" y2="1"><stop offset="0" stop-color="#1a1a1a"/><stop offset="1" stop-color="#2a2a2a"/></linearGradient>
<linearGradient id="cbtn" x1="0" y1="0" x2="0" y2="1"><stop offset="0" stop-color="#b0b0b0"/><stop offset="1" stop-color="#6c6c6c"/></linearGradient>
<linearGradient id="dkc" x1="0" y1="0" x2="0" y2="1"><stop offset="0" stop-color="#303030"/><stop offset="1" stop-color="#484848"/></linearGradient>
<linearGradient id="ccirc" x1="0" y1="0" x2="0" y2="1"><stop offset="0" stop-color="#808080"/><stop offset="1" stop-color="#acacac"/></linearGradient>
<linearGradient id="darkb" x1="0" y1="0" x2="0" y2="1"><stop offset="0" stop-color="#3c3c3c"/><stop offset="1" stop-color="#262626"/></linearGradient>
<linearGradient id="sqf" x1="0" y1="0" x2="0" y2="1"><stop offset="0" stop-color="#b4b4b4"/><stop offset="0.5" stop-color="#a4a4a4"/><stop offset="0.52" stop-color="#8a8a8a"/><stop offset="1" stop-color="#868686"/></linearGradient>
<linearGradient id="nbtn" x1="0" y1="0" x2="0" y2="1"><stop offset="0" stop-color="#aaaaaa"/><stop offset="1" stop-color="#707070"/></linearGradient>
</defs>
<rect x="1.2" y="1133" width="1855.4" height="67" fill="#323232"/>
<rect x="0.8" y="1140" width="72" height="58.8" fill="url(#bbtn)" rx="4.5"/>
<rect x="6" y="1144.4" width="61.6" height="35" fill="#000000" rx="3.2" stroke="#3c3c3c" stroke-width="1"/>
<text x="36.8" y="1194.8" font-size="10.6" fill="#2e2e2e" text-anchor="middle" font-weight="bold" textLength="5.65" lengthAdjust="spacingAndGlyphs">0</text>
<rect x="74.3" y="1140" width="72" height="58.8" fill="url(#bbtn)" rx="4.5"/>
<rect x="79.5" y="1144.4" width="61.6" height="35" fill="#0d0d0d" rx="3.2" stroke="#464646" stroke-width="1"/>
<text x="110.3" y="1194.8" font-size="10.6" fill="#2e2e2e" text-anchor="middle" font-weight="bold" textLength="5.65" lengthAdjust="spacingAndGlyphs">5</text>
<rect x="147.8" y="1140" width="72" height="58.8" fill="url(#bbtn)" rx="4.5"/>
<rect x="153" y="1144.4" width="61.6" height="35" fill="#1a1a1a" rx="3.2" stroke="#4f4f4f" stroke-width="1"/>
<text x="183.8" y="1194.8" font-size="10.6" fill="#2e2e2e" text-anchor="middle" font-weight="bold" textLength="11.31" lengthAdjust="spacingAndGlyphs">10</text>
<rect x="221.3" y="1140" width="72" height="58.8" fill="url(#bbtn)" rx="4.5"/>
<rect x="226.5" y="1144.4" width="61.6" height="35" fill="#262626" rx="3.2" stroke="#595959" stroke-width="1"/>
<text x="257.3" y="1194.8" font-size="10.6" fill="#2e2e2e" text-anchor="middle" font-weight="bold" textLength="11.31" lengthAdjust="spacingAndGlyphs">15</text>
<rect x="294.8" y="1140" width="72" height="58.8" fill="url(#bbtn)" rx="4.5"/>
<rect x="300" y="1144.4" width="61.6" height="35" fill="#333333" rx="3.2" stroke="#626262" stroke-width="1"/>
<text x="330.8" y="1194.8" font-size="10.6" fill="#2e2e2e" text-anchor="middle" font-weight="bold" textLength="11.31" lengthAdjust="spacingAndGlyphs">20</text>
<rect x="368.3" y="1140" width="72" height="58.8" fill="url(#bbtn)" rx="4.5"/>
<rect x="373.5" y="1144.4" width="61.6" height="35" fill="#404040" rx="3.2" stroke="#6c6c6c" stroke-width="1"/>
<text x="404.3" y="1194.8" font-size="10.6" fill="#2e2e2e" text-anchor="middle" font-weight="bold" textLength="11.31" lengthAdjust="spacingAndGlyphs">25</text>
<rect x="441.8" y="1140" width="72" height="58.8" fill="url(#bbtn)" rx="4.5"/>
<rect x="447" y="1144.4" width="61.6" height="35" fill="#4c4c4c" rx="3.2" stroke="#757575" stroke-width="1"/>
<text x="477.8" y="1194.8" font-size="10.6" fill="#2e2e2e" text-anchor="middle" font-weight="bold" textLength="11.31" lengthAdjust="spacingAndGlyphs">30</text>
<rect x="515.3" y="1140" width="72" height="58.8" fill="url(#bbtn)" rx="4.5"/>
<rect x="520.5" y="1144.4" width="61.6" height="35" fill="#595959" rx="3.2" stroke="#7f7f7f" stroke-width="1"/>
<text x="551.3" y="1194.8" font-size="10.6" fill="#2e2e2e" text-anchor="middle" font-weight="bold" textLength="11.31" lengthAdjust="spacingAndGlyphs">35</text>
<rect x="588.8" y="1140" width="72" height="58.8" fill="url(#bbtn)" rx="4.5"/>
<rect x="594" y="1144.4" width="61.6" height="35" fill="#666666" rx="3.2" stroke="#888888" stroke-width="1"/>
<text x="624.8" y="1194.8" font-size="10.6" fill="#2e2e2e" text-anchor="middle" font-weight="bold" textLength="11.31" lengthAdjust="spacingAndGlyphs">40</text>
<rect x="662.3" y="1140" width="72" height="58.8" fill="url(#bbtn)" rx="4.5"/>
<rect x="667.5" y="1144.4" width="61.6" height="35" fill="#737373" rx="3.2" stroke="#929292" stroke-width="1"/>
<text x="698.3" y="1194.8" font-size="10.6" fill="#2e2e2e" text-anchor="middle" font-weight="bold" textLength="11.31" lengthAdjust="spacingAndGlyphs">45</text>
<rect x="735.8" y="1140" width="72" height="58.8" fill="url(#bbtn)" rx="4.5"/>
<rect x="741" y="1144.4" width="61.6" height="35" fill="#7f7f7f" rx="3.2" stroke="#9c9c9c" stroke-width="1"/>
<text x="771.8" y="1194.8" font-size="10.6" fill="#2e2e2e" text-anchor="middle" font-weight="bold" textLength="11.31" lengthAdjust="spacingAndGlyphs">50</text>
<rect x="809.3" y="1140" width="72" height="58.8" fill="url(#bbtn)" rx="4.5"/>
<rect x="814.5" y="1144.4" width="61.6" height="35" fill="#8c8c8c" rx="3.2" stroke="#a5a5a5" stroke-width="1"/>
<text x="845.3" y="1194.8" font-size="10.6" fill="#2e2e2e" text-anchor="middle" font-weight="bold" textLength="11.31" lengthAdjust="spacingAndGlyphs">55</text>
<rect x="882.8" y="1140" width="72" height="58.8" fill="url(#bbtn)" rx="4.5"/>
<rect x="888" y="1144.4" width="61.6" height="35" fill="#999999" rx="3.2" stroke="#afafaf" stroke-width="1"/>
<text x="918.8" y="1194.8" font-size="10.6" fill="#2e2e2e" text-anchor="middle" font-weight="bold" textLength="11.31" lengthAdjust="spacingAndGlyphs">60</text>
<rect x="956.3" y="1140" width="72" height="58.8" fill="url(#bbtn)" rx="4.5"/>
<rect x="961.5" y="1144.4" width="61.6" height="35" fill="#a6a6a6" rx="3.2" stroke="#b8b8b8" stroke-width="1"/>
<text x="992.3" y="1194.8" font-size="10.6" fill="#2e2e2e" text-anchor="middle" font-weight="bold" textLength="11.31" lengthAdjust="spacingAndGlyphs">65</text>
<rect x="1029.8" y="1140" width="72" height="58.8" fill="url(#bbtn)" rx="4.5"/>
<rect x="1035" y="1144.4" width="61.6" height="35" fill="#b2b2b2" rx="3.2" stroke="#c2c2c2" stroke-width="1"/>
<text x="1065.8" y="1194.8" font-size="10.6" fill="#2e2e2e" text-anchor="middle" font-weight="bold" textLength="11.31" lengthAdjust="spacingAndGlyphs">70</text>
<rect x="1103.3" y="1140" width="72" height="58.8" fill="url(#bbtn)" rx="4.5"/>
<rect x="1108.5" y="1144.4" width="61.6" height="35" fill="#bfbfbf" rx="3.2" stroke="#cbcbcb" stroke-width="1"/>
<text x="1139.3" y="1194.8" font-size="10.6" fill="#2e2e2e" text-anchor="middle" font-weight="bold" textLength="11.31" lengthAdjust="spacingAndGlyphs">75</text>
<rect x="1176.8" y="1140" width="72" height="58.8" fill="url(#bbtn)" rx="4.5"/>
<rect x="1182" y="1144.4" width="61.6" height="35" fill="#cccccc" rx="3.2" stroke="#d5d5d5" stroke-width="1"/>
<text x="1212.8" y="1194.8" font-size="10.6" fill="#2e2e2e" text-anchor="middle" font-weight="bold" textLength="11.31" lengthAdjust="spacingAndGlyphs">80</text>
<rect x="1250.3" y="1140" width="72" height="58.8" fill="url(#bbtn)" rx="4.5"/>
<rect x="1255.5" y="1144.4" width="61.6" height="35" fill="#d9d9d9" rx="3.2" stroke="#dfdfdf" stroke-width="1"/>
<text x="1286.3" y="1194.8" font-size="10.6" fill="#2e2e2e" text-anchor="middle" font-weight="bold" textLength="11.31" lengthAdjust="spacingAndGlyphs">85</text>
<rect x="1323.8" y="1140" width="72" height="58.8" fill="url(#bbtn)" rx="4.5"/>
<rect x="1329" y="1144.4" width="61.6" height="35" fill="#e5e5e5" rx="3.2" stroke="#e8e8e8" stroke-width="1"/>
<text x="1359.8" y="1194.8" font-size="10.6" fill="#2e2e2e" text-anchor="middle" font-weight="bold" textLength="11.31" lengthAdjust="spacingAndGlyphs">90</text>
<rect x="1397.3" y="1140" width="72" height="58.8" fill="url(#bbtn)" rx="4.5"/>
<rect x="1402.5" y="1144.4" width="61.6" height="35" fill="#f2f2f2" rx="3.2" stroke="#f2f2f2" stroke-width="1"/>
<text x="1433.3" y="1194.8" font-size="10.6" fill="#2e2e2e" text-anchor="middle" font-weight="bold" textLength="11.31" lengthAdjust="spacingAndGlyphs">95</text>
<rect x="1470.8" y="1140" width="72" height="58.8" fill="url(#bsel)" rx="4.5"/>
<rect x="1476" y="1144.4" width="61.6" height="35" fill="#ffffff" rx="3.2" stroke="#ffffff" stroke-width="1"/>
<text x="1506.8" y="1194.8" font-size="10.6" fill="#ffffff" text-anchor="middle" font-weight="bold" textLength="16.96" lengthAdjust="spacingAndGlyphs">100</text>
<path d="M1545.8 1156.8V1144Q1545.8 1140 1549.8 1140H1587.7Q1591.7 1140 1591.7 1144V1156.8Z" fill="url(#cbtn)"/>
<circle cx="1568.7" cy="1148.2" r="7.2" fill="url(#ccirc)"/>
<polygon points="1563.8,1150.6 1573.6,1150.6 1568.7,1145.2" fill="#3a3a3a"/>
<path d="M1545.8 1158.4H1591.7V1194.8Q1591.7 1198.8 1587.7 1198.8H1549.8Q1545.8 1198.8 1545.8 1194.8Z" fill="url(#cbtn)"/>
<rect x="1553.6" y="1163.8" width="29.4" height="29.2" fill="url(#sqf)" rx="4.5" stroke="#1e1e1e" stroke-width="1.8"/>
<rect x="1562" y="1172" width="13.2" height="13.2" fill="#000000"/>
<path d="M1593 1168.8V1144Q1593 1140 1597 1140H1636.4V1168.8Z" fill="url(#cbtn)"/>
<circle cx="1614.7" cy="1154.2" r="9.8" fill="url(#ccirc)"/>
<rect x="1637.4" y="1140" width="42.9" height="28.8" fill="url(#cbtn)"/>
<circle cx="1658.85" cy="1154.2" r="9.8" fill="url(#ccirc)"/>
<rect x="1681.3" y="1140" width="42.1" height="28.8" fill="url(#cbtn)"/>
<circle cx="1702.35" cy="1154.2" r="9.8" fill="url(#ccirc)"/>
<rect x="1724.4" y="1140" width="42.9" height="28.8" fill="url(#cbtn)"/>
<circle cx="1745.85" cy="1154.2" r="9.8" fill="url(#ccirc)"/>
<rect x="1768.3" y="1140" width="42.6" height="28.8" fill="url(#cbtn)"/>
<circle cx="1789.6" cy="1154.2" r="9.8" fill="url(#ccirc)"/>
<path d="M1811.9 1140H1852.7Q1856.7 1140 1856.7 1144V1168.8H1811.9Z" fill="url(#darkb)"/>
<circle cx="1834.4" cy="1154.2" r="9.8" fill="url(#dkc)"/>
<rect x="1610.9" y="1150.4" width="7.6" height="7.6" fill="#333333"/>
<polygon points="1655.65,1148.8 1655.65,1159.6 1664.05,1154.2" fill="#333333"/>
<path d="M1699.75 1149.6H1697.55V1158.8H1699.75M1704.95 1149.6H1707.15V1158.8H1704.95" fill="none" stroke="#333333" stroke-width="2.2"/>
<path d="M1699.95 1154.2H1701.75M1702.95 1154.2H1704.75" fill="none" stroke="#333333" stroke-width="1.5"/>
<text x="1745.85" y="1159.6" font-size="17" fill="#333333" text-anchor="middle" font-weight="bold" textLength="14" lengthAdjust="spacingAndGlyphs">∞</text>
<path d="M1784.8 1152.8A4.9 4.9 0 0 1 1793 1150.9M1794.4 1155.6A4.9 4.9 0 0 1 1786.2 1157.5" fill="none" stroke="#333333" stroke-width="2.7"/>
<polygon points="1790.4,1152.4 1795.8,1147.4 1796,1153.8" fill="#333333"/>
<polygon points="1788.8,1156 1783.4,1161 1783.2,1154.6" fill="#333333"/>
<path d="M1593 1199.4V1174Q1593 1170 1597 1170H1723.8V1199.4Z" fill="url(#nbtn)"/>
<path d="M1725 1199.4V1170H1852.6Q1856.6 1170 1856.6 1174V1199.4Z" fill="url(#nbtn)"/>
<circle cx="1622.4" cy="1184.3" r="9.6" fill="url(#ccirc)"/>
<circle cx="1829" cy="1184.3" r="9.6" fill="url(#ccirc)"/>
<text x="1622.2" y="1190" font-size="19" fill="#333333" text-anchor="middle" font-weight="bold" textLength="10.57" lengthAdjust="spacingAndGlyphs">«</text>
<text x="1829.2" y="1190" font-size="19" fill="#333333" text-anchor="middle" font-weight="bold" textLength="10.57" lengthAdjust="spacingAndGlyphs">»</text>
<text x="1649" y="1192.2" font-size="21" fill="#c2c2c2" textLength="48" lengthAdjust="spacingAndGlyphs" stroke="#c2c2c2" stroke-width="0.4" transform="translate(0.6,1)">Back</text>
<text x="1649" y="1192.2" font-size="21" fill="#2f2f2f" textLength="48" lengthAdjust="spacingAndGlyphs" stroke="#2f2f2f" stroke-width="0.5">Back</text>
<text x="1751.6" y="1192.2" font-size="21" fill="#c2c2c2" textLength="50" lengthAdjust="spacingAndGlyphs" stroke="#c2c2c2" stroke-width="0.4" transform="translate(0.6,1)">Next</text>
<text x="1751.6" y="1192.2" font-size="21" fill="#2f2f2f" textLength="50" lengthAdjust="spacingAndGlyphs" stroke="#2f2f2f" stroke-width="0.5">Next</text>
</svg>
</body></html>
